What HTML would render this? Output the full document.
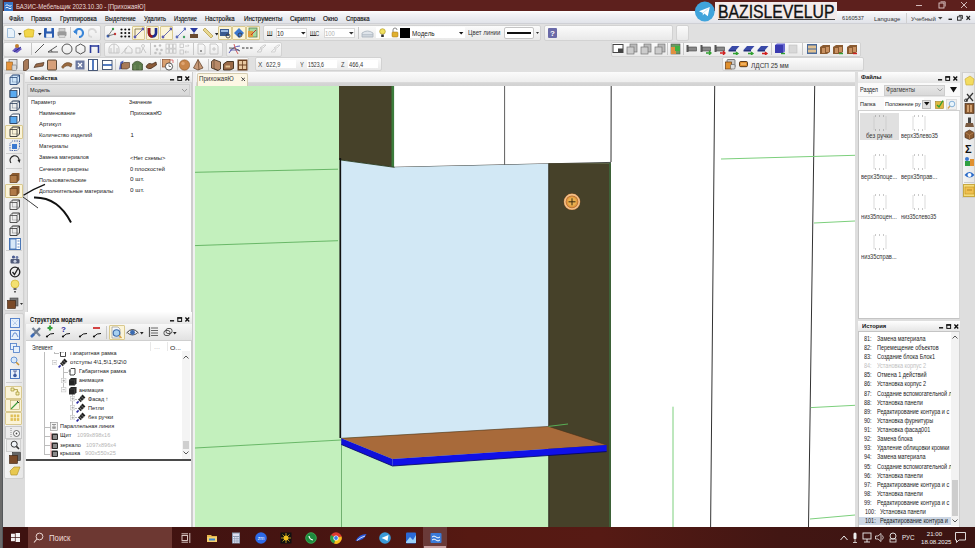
<!DOCTYPE html><html><head><meta charset="utf-8"><style>
*{margin:0;padding:0;box-sizing:border-box}
html,body{width:975px;height:548px;overflow:hidden;background:#e1e1e1;font-family:"Liberation Sans",sans-serif;color:#222;position:relative}
.a{position:absolute}
.t{position:absolute;white-space:nowrap;line-height:1}
.grp{position:absolute;border:1px solid #d2d2d2;border-radius:2px;background:linear-gradient(#fbfbfb,#e9e9e9)}
.hl{position:absolute;background:#fbf4d8;border:1px solid #d9c98f;border-radius:1px}
.sep{position:absolute;width:1px;background:#c8c8c8}
.inp{position:absolute;background:#fff;border:1px solid #d8d8d8}
.pt{font-size:5.6px;color:#333}
</style></head><body>
<div class="a" style="left:0px;top:0px;width:975px;height:11.3px;background:#5d201d"></div>
<svg class="a" style="left:4px;top:1.5px;" width="9" height="9" viewBox="0 0 9 9"><rect x="0" y="0" width="9" height="9" fill="#3a78c8"/><path d="M1.5 3.5 Q3 2 4.5 3.5 T7.5 3.5 M1.5 6 Q3 4.5 4.5 6 T7.5 6" stroke="#fff" stroke-width="0.9" fill="none"/></svg>
<div class="t" style="left:15.60px;top:4.14px;font-size:7.12px;transform:scaleX(0.849);transform-origin:0 0;color:#eadad8">БАЗИС-Мебельщик 2023.10.30 - [ПрихожаяЮ]</div>
<svg class="a" style="left:914px;top:0px;" width="56" height="11" viewBox="0 0 56 11"><path d="M2 5.5 H8" stroke="#e0cccc" stroke-width="0.9"/><rect x="25" y="3" width="5" height="5" fill="none" stroke="#e0cccc" stroke-width="0.9"/><path d="M26.5 1.8 H31.2 V6.5" fill="none" stroke="#e0cccc" stroke-width="0.8"/><path d="M47 2 L53 8 M53 2 L47 8" stroke="#e0cccc" stroke-width="0.9"/></svg>
<div class="a" style="left:0px;top:0px;width:3px;height:548px;background:linear-gradient(90deg,#6a6a6a 0,#6a6a6a 2px,#54575a 2px)"></div>
<div class="a" style="left:3px;top:11.3px;width:972px;height:12.7px;background:linear-gradient(#ffffff 0%,#f3f4f7 25%,#e2e4ea 95%);border-bottom:1px solid #cfd0d5"></div>
<div class="a" style="left:3px;top:24px;width:972px;height:1px;background:#fafafa"></div>
<div class="t" style="left:9.20px;top:15.71px;font-size:6.54px;transform:scaleX(0.896);transform-origin:0 0;color:#111;-webkit-text-stroke:0.15px #111">Файл</div>
<div class="t" style="left:31.20px;top:15.71px;font-size:6.54px;transform:scaleX(0.928);transform-origin:0 0;color:#111;-webkit-text-stroke:0.15px #111">Правка</div>
<div class="t" style="left:59.50px;top:15.71px;font-size:6.54px;transform:scaleX(0.968);transform-origin:0 0;color:#111;-webkit-text-stroke:0.15px #111">Группировка</div>
<div class="t" style="left:104.60px;top:15.71px;font-size:6.54px;transform:scaleX(0.889);transform-origin:0 0;color:#111;-webkit-text-stroke:0.15px #111">Выделение</div>
<div class="t" style="left:143.60px;top:15.71px;font-size:6.54px;transform:scaleX(0.885);transform-origin:0 0;color:#111;-webkit-text-stroke:0.15px #111">Удалить</div>
<div class="t" style="left:174.00px;top:15.71px;font-size:6.54px;transform:scaleX(0.888);transform-origin:0 0;color:#111;-webkit-text-stroke:0.15px #111">Изделие</div>
<div class="t" style="left:205.30px;top:15.71px;font-size:6.54px;transform:scaleX(0.922);transform-origin:0 0;color:#111;-webkit-text-stroke:0.15px #111">Настройка</div>
<div class="t" style="left:243.60px;top:15.71px;font-size:6.54px;transform:scaleX(0.947);transform-origin:0 0;color:#111;-webkit-text-stroke:0.15px #111">Инструменты</div>
<div class="t" style="left:289.80px;top:15.71px;font-size:6.54px;transform:scaleX(0.965);transform-origin:0 0;color:#111;-webkit-text-stroke:0.15px #111">Скрипты</div>
<div class="t" style="left:322.80px;top:15.71px;font-size:6.54px;transform:scaleX(0.974);transform-origin:0 0;color:#111;-webkit-text-stroke:0.15px #111">Окно</div>
<div class="t" style="left:345.80px;top:15.71px;font-size:6.54px;transform:scaleX(0.920);transform-origin:0 0;color:#111;-webkit-text-stroke:0.15px #111">Справка</div>
<div class="t" style="left:842.00px;top:16.04px;font-size:5.96px;transform:scaleX(0.944);transform-origin:0 0;color:#333">6160537</div>
<div class="t" style="left:873.60px;top:15.98px;font-size:6.10px;transform:scaleX(0.968);transform-origin:0 0;color:#333">Language</div>
<div class="a" style="left:906px;top:13px;width:0.8px;height:10px;background:#d0d0d0"></div>
<div class="t" style="left:910.70px;top:15.98px;font-size:6.10px;transform:scaleX(0.990);transform-origin:0 0;color:#333">Учебный</div>
<svg class="a" style="left:938px;top:17px;" width="5" height="3" viewBox="0 0 5 3"><path d="M0 0 H4.5 L2.25 2.5 Z" fill="#444"/></svg>
<svg class="a" style="left:947px;top:14px;" width="26" height="9" viewBox="0 0 26 9"><rect x="1.5" y="4.6" width="3.5" height="1.4" fill="#222"/><rect x="10.5" y="2.8" width="3.6" height="3.4" fill="none" stroke="#222" stroke-width="0.9"/><path d="M11.8 1.4 H15.4 V5" fill="none" stroke="#222" stroke-width="0.9"/><path d="M19.5 2 L23 5.8 M23 2 L19.5 5.8" stroke="#222" stroke-width="1.2"/></svg>
<div class="a" style="left:714.6px;top:1.6px;width:122.3px;height:18.1px;background:#f3ebeb"></div>
<div class="a" style="left:718px;top:18.9px;width:117px;height:1.1px;background:#444"></div>
<div class="t" style="left:717.90px;top:4.26px;font-size:17.88px;transform:scaleX(0.882);transform-origin:0 0;color:#111;-webkit-text-stroke:0.35px #111">BAZISLEVELUP</div>
<svg class="a" style="left:694px;top:1px;" width="22" height="22" viewBox="0 0 22 22"><circle cx="10.8" cy="10.5" r="9.9" fill="#40a4dc"/><path d="M5 10.3 L15.8 6 L13.8 15.2 L10.3 12.6 L8.8 14.5 L8.8 12 Z" fill="#fff"/><path d="M8.8 12 L14.3 7.6" stroke="#b8dcf0" stroke-width="0.8"/></svg>
<div class="a" style="left:3px;top:24px;width:972px;height:48px;background:#e0e0e0"></div>
<div class="grp" style="left:3px;top:24.5px;width:98px;height:16.5px;"></div>
<div class="grp" style="left:104px;top:24.5px;width:156px;height:16.5px;"></div>
<div class="grp" style="left:263px;top:24.5px;width:278px;height:16.5px;"></div>
<div class="grp" style="left:544px;top:24.5px;width:129px;height:16.5px;"></div>
<div class="grp" style="left:676px;top:24.5px;width:13px;height:16.5px;"></div>
<svg class="a" style="left:6px;top:28px;" width="10" height="10" viewBox="0 0 10 10"><path d="M1.5 0.5 H6 L8.5 3 V9.5 H1.5 Z" fill="#e8f2fb" stroke="#9fbcd8" stroke-width="1"/></svg>
<svg class="a" style="left:17.8px;top:32.6px;" width="4" height="3" viewBox="0 0 4 3"><path d="M0 0 H3.6 L1.8 2.4 Z" fill="#222"/></svg>
<svg class="a" style="left:23px;top:28px;" width="12" height="10" viewBox="0 0 12 10"><path d="M1 3 L5 1 L11 2 L10 9 L2 9 Z" fill="#f2d64a" stroke="#d2b020" stroke-width="0.8"/></svg>
<svg class="a" style="left:37.8px;top:32.6px;" width="4" height="3" viewBox="0 0 4 3"><path d="M0 0 H3.6 L1.8 2.4 Z" fill="#222"/></svg>
<svg class="a" style="left:43.6px;top:28.1px;" width="10.2" height="9.7" viewBox="0 0 10.2 9.7"><rect x="0" y="0" width="10.2" height="9.7" rx="1" fill="#2a5cb0"/><rect x="2.8" y="0" width="4.6" height="3.4" fill="#eef2f8"/><rect x="2.2" y="5.6" width="5.8" height="4.1" fill="#eef2f8"/></svg>
<svg class="a" style="left:57px;top:28px;" width="10" height="10" viewBox="0 0 10 10"><rect x="2" y="0.5" width="6" height="3" fill="#cfcfcf" stroke="#999" stroke-width="0.6"/><rect x="0.5" y="3.5" width="9" height="4.5" rx="1" fill="#9a9a9a"/><rect x="2" y="7" width="6" height="2.5" fill="#ddd" stroke="#999" stroke-width="0.5"/></svg>
<div class="sep" style="left:70px;top:27px;width:1px;height:11px;"></div>
<svg class="a" style="left:73px;top:28px;" width="11" height="10" viewBox="0 0 11 10"><path d="M2 5 A4 4 0 1 1 6 9" fill="none" stroke="#3a86d8" stroke-width="2.2"/><path d="M0 3 L4 7 L4.5 2 Z" fill="#3a86d8"/></svg>
<svg class="a" style="left:88px;top:28px;" width="10" height="10" viewBox="0 0 10 10"><path d="M8 5 A4 4 0 1 0 4 9" fill="none" stroke="#d8d8d8" stroke-width="2"/></svg>
<svg class="a" style="left:106px;top:27px;" width="11" height="12" viewBox="0 0 11 12"><circle cx="2" cy="9" r="1.5" fill="#3c5fb0"/><circle cx="7" cy="2" r="1.2" fill="#3aa04a"/><circle cx="9" cy="7" r="1.2" fill="#d03030"/><path d="M2 9 L7 2 M2 9 L9 7" stroke="#555" stroke-width="0.7"/></svg>
<svg class="a" style="left:120px;top:28px;" width="11" height="10" viewBox="0 0 11 10"><circle cx="1.5" cy="1.5" r="1.1" fill="#111"/><circle cx="1.5" cy="5.0" r="1.1" fill="#111"/><circle cx="1.5" cy="8.5" r="1.1" fill="#111"/><circle cx="5.3" cy="1.5" r="1.1" fill="#111"/><circle cx="5.3" cy="5.0" r="1.1" fill="#111"/><circle cx="5.3" cy="8.5" r="1.1" fill="#111"/><circle cx="9.1" cy="1.5" r="1.1" fill="#111"/><circle cx="9.1" cy="5.0" r="1.1" fill="#111"/><circle cx="9.1" cy="8.5" r="1.1" fill="#111"/></svg>
<div class="hl" style="left:132px;top:26px;width:13px;height:14px;"></div>
<svg class="a" style="left:133px;top:27px;" width="11" height="12" viewBox="0 0 11 12"><path d="M2 10 V2 H10" fill="none" stroke="#7a6a40" stroke-width="0.8"/><path d="M2 10 L10 2" stroke="#6a6ab0" stroke-width="1"/><circle cx="2" cy="10" r="1.4" fill="#5a5ab0"/><circle cx="10" cy="2" r="1.4" fill="#5a5ab0"/></svg>
<div class="hl" style="left:146px;top:26px;width:13px;height:14px;"></div>
<svg class="a" style="left:147px;top:27px;" width="11" height="12" viewBox="0 0 11 12"><path d="M2 1 V6 A3.5 3.5 0 0 0 9 6 V1" fill="none" stroke="#1e2e90" stroke-width="2.6"/><path d="M2 1 V6 A3.5 3.5 0 0 0 5.5 9.5" fill="none" stroke="#9a1a1a" stroke-width="2.6"/></svg>
<div class="hl" style="left:160px;top:26px;width:13px;height:14px;"></div>
<svg class="a" style="left:161px;top:27px;" width="11" height="12" viewBox="0 0 11 12"><path d="M2 10 L10 2" stroke="#6a6ab0" stroke-width="1"/><circle cx="2" cy="10" r="1.4" fill="#5a5ab0"/><circle cx="10" cy="2" r="1.4" fill="#5a5ab0"/></svg>
<svg class="a" style="left:175px;top:27px;" width="11" height="12" viewBox="0 0 11 12"><path d="M2 10 L10 2" stroke="#6a7ac0" stroke-width="1"/><circle cx="2" cy="10" r="1.4" fill="#5a6ab8"/><circle cx="10" cy="2" r="1.4" fill="#5a6ab8"/><circle cx="9" cy="10" r="1.2" fill="#40a060"/></svg>
<svg class="a" style="left:189px;top:27px;" width="10" height="12" viewBox="0 0 10 12"><path d="M1 1 H9 L5 6 L9 11 H1 L5 6 Z" fill="#2a3aa0"/><rect x="1" y="7" width="8" height="4" fill="#6a4a30"/></svg>
<svg class="a" style="left:202px;top:27px;" width="12" height="12" viewBox="0 0 12 12"><path d="M1 3 L3 1 L11 9 L9 11 Z" fill="#e8d890" stroke="#b8a050" stroke-width="0.8"/></svg>
<svg class="a" style="left:215.3px;top:32.6px;" width="4" height="3" viewBox="0 0 4 3"><path d="M0 0 H3.6 L1.8 2.4 Z" fill="#222"/></svg>
<div class="hl" style="left:218px;top:26px;width:14px;height:14px;"></div>
<svg class="a" style="left:219px;top:27px;" width="12" height="12" viewBox="0 0 12 12"><rect x="1" y="2" width="9" height="7" fill="#3a5a90"/><rect x="2" y="3" width="7" height="2" fill="#9ab8e0"/><circle cx="9" cy="9" r="2" fill="none" stroke="#333" stroke-width="0.8"/></svg>
<div class="hl" style="left:232px;top:26px;width:14px;height:14px;"></div>
<svg class="a" style="left:233px;top:27px;" width="12" height="12" viewBox="0 0 12 12"><path d="M1 6 L6 1 L11 6 L6 11 Z" fill="#3a78d0"/><circle cx="7" cy="8" r="2" fill="none" stroke="#333" stroke-width="0.8"/></svg>
<div class="hl" style="left:246px;top:26px;width:14px;height:14px;"></div>
<svg class="a" style="left:247px;top:27px;" width="12" height="12" viewBox="0 0 12 12"><rect x="2" y="1" width="8" height="9" fill="#a8d8a0" stroke="#508050" stroke-width="0.8"/><rect x="1" y="4" width="5" height="6" fill="#e0a040"/><path d="M4 8 L9 3" stroke="#c03030" stroke-width="1"/></svg>
<div class="t" style="left:266.70px;top:30.44px;font-size:7.27px;transform:scaleX(0.841);transform-origin:0 0;color:#333">Ш</div>
<div class="a" style="left:266.7px;top:35.3px;width:5.6px;height:0.9px;background:#333"></div>
<div class="inp" style="left:276.4px;top:27.6px;width:30.8px;height:10.2px;"></div>
<div class="t" style="left:277.40px;top:30.35px;font-size:6.98px;transform:scaleX(0.863);transform-origin:0 0;color:#222">10</div>
<svg class="a" style="left:300.5px;top:32px;" width="5" height="3" viewBox="0 0 5 3"><path d="M0 0 H4.6 L2.3 2.6 Z" fill="#222"/></svg>
<div class="t" style="left:310.30px;top:30.44px;font-size:7.27px;transform:scaleX(0.772);transform-origin:0 0;color:#333">ШС</div>
<div class="a" style="left:310.3px;top:35.3px;width:6px;height:0.9px;background:#333"></div>
<div class="inp" style="left:324.1px;top:27.6px;width:30.8px;height:10.2px;"></div>
<div class="t" style="left:325.10px;top:30.35px;font-size:6.98px;transform:scaleX(0.842);transform-origin:0 0;color:#b0b0b0">100</div>
<svg class="a" style="left:348.7px;top:32px;" width="5" height="3" viewBox="0 0 5 3"><path d="M0 0 H4.6 L2.3 2.6 Z" fill="#333"/></svg>
<div class="sep" style="left:357.5px;top:27px;width:0.8px;height:12px;"></div>
<svg class="a" style="left:360.8px;top:28.5px;" width="13" height="9" viewBox="0 0 13 9"><path d="M1 4 Q6.5 0 12 4 V8 H1 Z" fill="#dfe4ea" stroke="#a8b2bc" stroke-width="0.8"/><path d="M1 5.5 H12 M1 7 H12" stroke="#a8b2bc" stroke-width="0.6"/></svg>
<div class="a" style="left:375.5px;top:27px;width:89.6px;height:11px;background:#fff"></div>
<svg class="a" style="left:379.4px;top:27.5px;" width="7" height="10" viewBox="0 0 7 10"><circle cx="3.5" cy="3.5" r="2.8" fill="#f0e060" stroke="#a89020" stroke-width="0.6"/><rect x="2.2" y="6.5" width="2.6" height="2.5" fill="#333"/></svg>
<svg class="a" style="left:390.5px;top:27px;" width="8" height="11" viewBox="0 0 8 11"><path d="M2 5 V3 A2 2 0 0 1 6 3" fill="none" stroke="#888" stroke-width="1"/><rect x="1" y="5" width="6" height="5" rx="1" fill="#e0b030" stroke="#a07010" stroke-width="0.5"/></svg>
<div class="a" style="left:399.8px;top:28.3px;width:9.8px;height:9.3px;background:#000"></div>
<div class="t" style="left:411.90px;top:30.71px;font-size:6.54px;transform:scaleX(0.963);transform-origin:0 0;color:#222">Модель</div>
<svg class="a" style="left:459.3px;top:32px;" width="5" height="3" viewBox="0 0 5 3"><path d="M0 0 H4.4 L2.2 2.6 Z" fill="#111"/></svg>
<div class="t" style="left:468.00px;top:30.36px;font-size:6.69px;transform:scaleX(0.906);transform-origin:0 0;color:#333">Цвет линии</div>
<div class="inp" style="left:503.5px;top:27px;width:30.5px;height:11.6px;border-radius:2px;border-color:#c4c4c4"></div>
<div class="a" style="left:507px;top:32.3px;width:24.4px;height:1.6px;background:#111"></div>
<svg class="a" style="left:535.9px;top:32px;" width="3" height="2" viewBox="0 0 3 2"><path d="M0 0 H3 L1.5 2 Z" fill="#333"/></svg>
<svg class="a" style="left:548px;top:28px;" width="9" height="10" viewBox="0 0 9 10"><rect x="0" y="0" width="9" height="10" rx="1" fill="#6a6aa8"/><text x="4.5" y="8" font-size="8" font-family="Liberation Sans" font-weight="bold" fill="#fff" text-anchor="middle">?</text></svg>
<div class="grp" style="left:3px;top:41.5px;width:98px;height:15px;"></div>
<div class="grp" style="left:104px;top:41.5px;width:119px;height:15px;"></div>
<div class="grp" style="left:225.7px;top:41.5px;width:56.6px;height:15px;"></div>
<div class="grp" style="left:610.5px;top:41.5px;width:250px;height:15px;"></div>
<svg class="a" style="left:11px;top:43px;" width="12" height="11" viewBox="0 0 12 11"><path d="M1 8 L6 3 L11 6 L6 10 Z" fill="#6a5ac0"/><circle cx="6" cy="3" r="2" fill="#c08030"/><path d="M3 9 L10 4" stroke="#2a2a8a" stroke-width="1"/></svg>
<div class="sep" style="left:31px;top:43px;width:1px;height:12px;"></div>
<svg class="a" style="left:34px;top:43px;" width="11" height="11" viewBox="0 0 11 11"><path d="M1 10 L10 1" stroke="#444" stroke-width="0.9"/></svg>
<svg class="a" style="left:47px;top:43px;" width="12" height="11" viewBox="0 0 12 11"><path d="M1 9 H11 M1 9 L10 3" stroke="#444" stroke-width="0.9" fill="none"/><path d="M5 9 A4 4 0 0 0 4 7" stroke="#444" stroke-width="0.8" fill="none"/></svg>
<svg class="a" style="left:61px;top:43px;" width="12" height="12" viewBox="0 0 12 12"><circle cx="6" cy="6" r="5" fill="none" stroke="#444" stroke-width="0.9"/></svg>
<svg class="a" style="left:75px;top:43px;" width="11" height="12" viewBox="0 0 11 12"><path d="M5.5 1 L10 3.5 V8.5 L5.5 11 L1 8.5 V3.5 Z" fill="none" stroke="#444" stroke-width="0.9"/></svg>
<svg class="a" style="left:89px;top:43px;" width="11" height="11" viewBox="0 0 11 11"><path d="M1.5 10 V2 M9.5 10 V2 M1.5 3 H9.5" stroke="#2a3a9a" stroke-width="1.6" fill="none"/></svg>
<svg class="a" style="left:107.5px;top:43px;" width="12" height="12" viewBox="0 0 12 12"><path d="M1 10 V6 A5 5 0 0 1 11 6 V10 Z M6 1 V10 M3 10 V5 M9 10 V5" fill="none" stroke="#c2c2c2" stroke-width="0.9"/></svg>
<svg class="a" style="left:121px;top:43px;" width="12" height="12" viewBox="0 0 12 12"><path d="M4 10 V6 L7.5 3 L11 6 V10 Z" fill="none" stroke="#c2c2c2" stroke-width="0.9"/><path d="M0.5 11 L6 5" stroke="#c2c2c2" stroke-width="0.9"/></svg>
<svg class="a" style="left:134.5px;top:43px;" width="12" height="12" viewBox="0 0 12 12"><rect x="1" y="5" width="4" height="5" fill="none" stroke="#c2c2c2" stroke-width="0.9"/><circle cx="8" cy="3" r="1.5" fill="none" stroke="#c2c2c2" stroke-width="0.8"/><path d="M6 10 L8 5 L11 10" fill="none" stroke="#c2c2c2" stroke-width="0.9"/></svg>
<div class="sep" style="left:149.5px;top:43px;width:1px;height:12px;"></div>
<svg class="a" style="left:151.5px;top:43px;" width="12" height="12" viewBox="0 0 12 12"><circle cx="3" cy="3" r="1.3" fill="#c2c2c2"/><circle cx="8" cy="2.5" r="1.3" fill="#c2c2c2"/><circle cx="5" cy="6.5" r="1.3" fill="#c2c2c2"/><circle cx="9.5" cy="7" r="1.3" fill="#c2c2c2"/><circle cx="3.5" cy="10" r="1.3" fill="#c2c2c2"/><circle cx="8" cy="10.5" r="1.3" fill="#c2c2c2"/></svg>
<svg class="a" style="left:165px;top:43px;" width="12" height="12" viewBox="0 0 12 12"><rect x="1.0" y="1" width="2.8" height="4.2" fill="none" stroke="#c2c2c2" stroke-width="0.8"/><rect x="1.0" y="6" width="2.8" height="4.2" fill="none" stroke="#c2c2c2" stroke-width="0.8"/><rect x="4.6" y="1" width="2.8" height="4.2" fill="none" stroke="#c2c2c2" stroke-width="0.8"/><rect x="4.6" y="6" width="2.8" height="4.2" fill="none" stroke="#c2c2c2" stroke-width="0.8"/><rect x="8.2" y="1" width="2.8" height="4.2" fill="none" stroke="#c2c2c2" stroke-width="0.8"/><rect x="8.2" y="6" width="2.8" height="4.2" fill="none" stroke="#c2c2c2" stroke-width="0.8"/></svg>
<svg class="a" style="left:178.5px;top:43px;" width="12" height="12" viewBox="0 0 12 12"><rect x="1" y="1" width="3.5" height="3.5" fill="none" stroke="#c2c2c2" stroke-width="0.8"/><rect x="1" y="7" width="3.5" height="4" fill="none" stroke="#c2c2c2" stroke-width="0.8"/><path d="M6 3 H10 L9 1.5 M6 9 H10 M7 7.5 L6 9 L7 10.5" fill="none" stroke="#c2c2c2" stroke-width="0.8"/></svg>
<div class="sep" style="left:192.5px;top:43px;width:1px;height:12px;"></div>
<svg class="a" style="left:197px;top:43px;" width="9" height="12" viewBox="0 0 9 12"><path d="M1 1 H6 L8 3 V11 H1 Z" fill="none" stroke="#c2c2c2" stroke-width="0.9"/><rect x="3" y="7" width="2" height="2" fill="#999"/></svg>
<svg class="a" style="left:209px;top:43px;" width="10" height="12" viewBox="0 0 10 12"><path d="M1 1 H7 L9 3 V11 H1 Z" fill="none" stroke="#c2c2c2" stroke-width="0.9"/><path d="M5 4 V8 M3 6 H7" stroke="#c2c2c2" stroke-width="0.9"/></svg>
<svg class="a" style="left:228px;top:43px;" width="13" height="12" viewBox="0 0 13 12"><path d="M1 10 Q5 3 12 3" stroke="#5a5ab8" stroke-width="1" fill="none"/><path d="M1 5 Q7 4 12 8" stroke="#444" stroke-width="0.9" fill="none"/><path d="M6 1 Q7 7 10 11" stroke="#d05050" stroke-width="0.9" fill="none"/><path d="M2 7 H11" stroke="#3a3a9a" stroke-width="0.7"/></svg>
<svg class="a" style="left:242.3px;top:46px;" width="11" height="4" viewBox="0 0 11 4"><path d="M0 2 H2.5 M4 2 H6.5 M8 2 H10.5" stroke="#333" stroke-width="1.2"/></svg>
<svg class="a" style="left:256px;top:43px;" width="10" height="12" viewBox="0 0 10 12"><path d="M1 9 L4 6 H6 L5 9 Z M4 5 L8 2 H10 L7 5 Z" fill="none" stroke="#c8c8c8" stroke-width="0.9"/></svg>
<svg class="a" style="left:269.6px;top:43px;" width="10" height="12" viewBox="0 0 10 12"><path d="M1 9 L4 6 H6 L5 9 Z M4 5 L8 2 H10 L7 5 Z" fill="none" stroke="#d0d0d0" stroke-width="0.9"/></svg>
<svg class="a" style="left:612px;top:43px;" width="12" height="11" viewBox="0 0 12 11"><rect x="1" y="1.5" width="10" height="8" fill="#fff" stroke="#444" stroke-width="1"/><rect x="6" y="5.5" width="5" height="4" fill="#444"/></svg>
<svg class="a" style="left:626px;top:43px;" width="12" height="12" viewBox="0 0 12 12"><rect x="4" y="1" width="7" height="8" fill="#bbb" stroke="#777" stroke-width="0.7"/><rect x="1" y="4" width="7" height="7" fill="#ccc" stroke="#777" stroke-width="0.7"/></svg>
<svg class="a" style="left:640px;top:43px;" width="12" height="12" viewBox="0 0 12 12"><rect x="4" y="1" width="7" height="8" fill="#bbb" stroke="#777" stroke-width="0.7"/><rect x="1" y="4" width="7" height="7" fill="#ccc" stroke="#777" stroke-width="0.7"/></svg>
<svg class="a" style="left:654px;top:43px;" width="12" height="12" viewBox="0 0 12 12"><rect x="4" y="1" width="7" height="8" fill="#bbb" stroke="#777" stroke-width="0.7"/><rect x="1" y="4" width="7" height="7" fill="#ccc" stroke="#777" stroke-width="0.7"/></svg>
<div class="sep" style="left:667px;top:43px;width:1px;height:12px;"></div>
<svg class="a" style="left:670px;top:43px;" width="11" height="12" viewBox="0 0 11 12"><rect x="1" y="1" width="9" height="10" fill="#6a9a60" stroke="#555" stroke-width="0.6"/><rect x="1" y="4" width="5" height="7" fill="#e09040"/><rect x="5" y="3" width="5" height="5" fill="#40b040"/></svg>
<div class="sep" style="left:683px;top:43px;width:1px;height:12px;"></div>
<svg class="a" style="left:686px;top:43px;" width="12" height="12" viewBox="0 0 12 12"><rect x="0.5" y="2" width="2" height="7" fill="#555"/><rect x="2.5" y="4" width="8" height="4" fill="#888" stroke="#444" stroke-width="0.6"/></svg>
<svg class="a" style="left:700px;top:43px;" width="12" height="12" viewBox="0 0 12 12"><rect x="0.5" y="2" width="2" height="7" fill="#555"/><rect x="2.5" y="4" width="8" height="4" fill="#888" stroke="#444" stroke-width="0.6"/><path d="M6 10 H11 M9 8 L11 10 L9 12" stroke="#30a030" stroke-width="1.3" fill="none"/></svg>
<svg class="a" style="left:714px;top:43px;" width="12" height="12" viewBox="0 0 12 12"><rect x="0.5" y="2" width="2" height="7" fill="#555"/><rect x="2.5" y="4" width="8" height="4" fill="#888" stroke="#444" stroke-width="0.6"/><path d="M6 10 H11 M9 8 L11 10 L9 12" stroke="#d02020" stroke-width="1.3" fill="none"/></svg>
<svg class="a" style="left:728px;top:43px;" width="12" height="12" viewBox="0 0 12 12"><path d="M0.5 7 L4 3 H11.5 L8 7 Z" fill="#3a4aa8"/><path d="M0.5 7 H8 V8.5 H0.5 Z" fill="#23307a"/><path d="M5 10.5 H10 M8 9 L10 10.5 L8 12" stroke="#30a030" stroke-width="1.3" fill="none"/></svg>
<svg class="a" style="left:743px;top:43px;" width="12" height="12" viewBox="0 0 12 12"><path d="M0.5 7 L4 3 H11.5 L8 7 Z" fill="#3a4aa8"/><path d="M0.5 7 H8 V8.5 H0.5 Z" fill="#23307a"/><path d="M5 10.5 H10 M8 9 L10 10.5 L8 12" stroke="#30a030" stroke-width="1.3" fill="none"/></svg>
<svg class="a" style="left:757px;top:43px;" width="12" height="12" viewBox="0 0 12 12"><path d="M0.5 7 L4 3 H11.5 L8 7 Z" fill="#3a4aa8"/><path d="M0.5 7 H8 V8.5 H0.5 Z" fill="#23307a"/><path d="M5 10.5 H10 M8 9 L10 10.5 L8 12" stroke="#d02020" stroke-width="1.3" fill="none"/></svg>
<div class="sep" style="left:771px;top:43px;width:1px;height:12px;"></div>
<svg class="a" style="left:774px;top:43px;" width="12" height="12" viewBox="0 0 12 12"><rect x="1" y="2" width="8" height="8" fill="#3a3ab0"/><path d="M1 2 L3 0.5 H11 L9 2 Z M9 2 L11 0.5 V8.5 L9 10 Z" fill="#6a6ad0"/><path d="M7 10.5 H11" stroke="#30a030" stroke-width="1.4"/></svg>
<svg class="a" style="left:788px;top:43px;" width="12" height="12" viewBox="0 0 12 12"><rect x="1" y="2" width="8" height="8" fill="#d8d8d8" stroke="#c0c0c0" stroke-width="0.6"/></svg>
<div class="sep" style="left:802px;top:43px;width:1px;height:12px;"></div>
<svg class="a" style="left:806px;top:43px;" width="12" height="12" viewBox="0 0 12 12"><rect x="1" y="1" width="10" height="10" fill="#4a6a9a"/><rect x="2" y="2.5" width="8" height="3" fill="#e0c090"/><rect x="2" y="6.5" width="8" height="3" fill="#e0c090"/></svg>
<svg class="a" style="left:819px;top:43px;" width="12" height="12" viewBox="0 0 12 12"><path d="M1 4 L4 2 H11 V9 L8 11 H1 Z" fill="#8a5a30"/><path d="M3 5 H6 V10 H3 Z M7 4 H10 V9 H7Z" fill="#c89060"/></svg>
<svg class="a" style="left:832px;top:43px;" width="12" height="12" viewBox="0 0 12 12"><path d="M1 4 L4 2 H11 V9 L8 11 H1 Z" fill="#8a5a30"/><path d="M3 5 H6 V10 H3 Z M7 4 H10 V9 H7Z" fill="#c89060"/><path d="M7 10.5 H11" stroke="#30a030" stroke-width="1.4"/></svg>
<svg class="a" style="left:846px;top:43px;" width="12" height="12" viewBox="0 0 12 12"><path d="M1 4 L4 2 H11 V9 L8 11 H1 Z" fill="#8a5a30"/><path d="M3 5 H6 V10 H3 Z M7 4 H10 V9 H7Z" fill="#c89060"/><path d="M7 10.5 H11" stroke="#d02020" stroke-width="1.4"/></svg>
<div class="grp" style="left:3px;top:56.8px;width:246px;height:14.4px;"></div>
<div class="grp" style="left:255px;top:57.2px;width:127.1px;height:13.6px;"></div>
<div class="grp" style="left:722.2px;top:56.6px;width:142.2px;height:14.3px;"></div>
<svg class="a" style="left:5.5px;top:58.5px;" width="12" height="12" viewBox="0 0 12 12"><rect x="3" y="0.5" width="8" height="9" fill="#e0e0e0" stroke="#666" stroke-width="0.7"/><rect x="0.5" y="3" width="6" height="8" fill="#e8943a" stroke="#8a5a20" stroke-width="0.6"/><rect x="6" y="6" width="4.5" height="5.5" rx="1" fill="#d8d8d8" stroke="#777" stroke-width="0.6"/></svg>
<svg class="a" style="left:21.5px;top:58.5px;" width="8" height="12" viewBox="0 0 8 12"><path d="M1.5 2.5 L4 0.5 H6.5 V9.5 L4 11.5 H1.5 Z" fill="#a87a58" stroke="#4a3020" stroke-width="0.7"/></svg>
<svg class="a" style="left:32.5px;top:58.5px;" width="12" height="12" viewBox="0 0 12 12"><path d="M1 8.5 L3 5 L11 3.5 L10 7 Z" fill="#9a6a48" stroke="#4a3020" stroke-width="0.7"/></svg>
<svg class="a" style="left:47px;top:58.5px;" width="11" height="12" viewBox="0 0 11 12"><rect x="0.5" y="1" width="9" height="10" rx="1" fill="#d6a07a" stroke="#3a2a18" stroke-width="0.8"/></svg>
<svg class="a" style="left:60.5px;top:58.5px;" width="12" height="12" viewBox="0 0 12 12"><path d="M0.5 8 Q5 1 11 5 L10 8 Q5 5 2 9.5 Z" fill="#9a6a40" stroke="#5a3a18" stroke-width="0.5"/></svg>
<svg class="a" style="left:74.5px;top:58.5px;" width="11" height="12" viewBox="0 0 11 12"><rect x="0.5" y="1.5" width="9" height="9" fill="#6a78a0"/><path d="M3 4 L7 8 M7 4 L3 8" stroke="#fff" stroke-width="1.2"/></svg>
<svg class="a" style="left:88px;top:58.5px;" width="11" height="12" viewBox="0 0 11 12"><rect x="0.5" y="0.5" width="9" height="11" fill="#fff" stroke="#3a4a6a" stroke-width="0.9"/><path d="M5 1 V11" stroke="#2a5ab0" stroke-width="1.6"/></svg>
<svg class="a" style="left:101.5px;top:58.5px;" width="11" height="12" viewBox="0 0 11 12"><rect x="0.5" y="1.5" width="9.5" height="9" fill="#fff" stroke="#3a4a6a" stroke-width="0.9"/><path d="M1 6 H10" stroke="#2a5ab0" stroke-width="1.6"/></svg>
<div class="sep" style="left:114.7px;top:59px;width:1px;height:12px;"></div>
<svg class="a" style="left:117.7px;top:58.5px;" width="12" height="12" viewBox="0 0 12 12"><path d="M1 10.5 L2.5 3 L5.5 1.5 L4 10 Z" fill="#4a5ab0"/><path d="M3.5 5 L6 3.5 H11.5 V8.5 L9 10 H3.5 Z" fill="#a87a58" stroke="#4a3020" stroke-width="0.6"/></svg>
<svg class="a" style="left:132.3px;top:58.5px;" width="11" height="12" viewBox="0 0 11 12"><path d="M0.5 11 V5 Q5 -0.5 10.5 5 V11 Z" fill="#5a7a4a" stroke="#3a4a2a" stroke-width="0.7"/><path d="M3 11 V6 M8 11 V6" stroke="#8aa070" stroke-width="0.6"/></svg>
<svg class="a" style="left:145.4px;top:58.5px;" width="12" height="12" viewBox="0 0 12 12"><path d="M1 8 Q3 3 7 5 L11 3 L11.5 6 L6 9.5 Q3 10.5 1 8 Z" fill="#8a5a38" stroke="#3a2010" stroke-width="0.7"/></svg>
<div class="sep" style="left:160px;top:59px;width:1px;height:12px;"></div>
<svg class="a" style="left:162.3px;top:58.5px;" width="12" height="12" viewBox="0 0 12 12"><rect x="0.5" y="0.5" width="7.5" height="7.5" fill="#d8a070" stroke="#8a5030" stroke-width="0.7"/><path d="M8 1 H11 V4" stroke="#d04040" stroke-width="0.7" fill="none"/><circle cx="7" cy="7.5" r="3.6" fill="#fff" stroke="#333" stroke-width="0.8"/><path d="M7 5.5 V7.5 H9" stroke="#333" stroke-width="0.6" fill="none"/></svg>
<div class="sep" style="left:177px;top:59px;width:1px;height:12px;"></div>
<svg class="a" style="left:179.2px;top:58.5px;" width="11" height="12" viewBox="0 0 11 12"><circle cx="5.5" cy="6" r="5.2" fill="#c8864a" stroke="#7a4a20" stroke-width="0.5"/><circle cx="4" cy="4.5" r="1.8" fill="#e8b080" opacity="0.7"/></svg>
<svg class="a" style="left:193px;top:58.5px;" width="11" height="12" viewBox="0 0 11 12"><path d="M5 0.5 L10 9 L5 11 L0.5 9 Z" fill="#c89a78" stroke="#5a3a20" stroke-width="0.7"/><path d="M5 0.5 L6 11" stroke="#5a3a20" stroke-width="0.6"/></svg>
<div class="sep" style="left:207.7px;top:59px;width:1px;height:12px;"></div>
<svg class="a" style="left:210.8px;top:58.5px;" width="11" height="12" viewBox="0 0 11 12"><path d="M0.5 2.5 L3 0.5 L9.5 3 V10 L7 11.5 L0.5 9 Z" fill="#b88a68" stroke="#3a2a18" stroke-width="0.8"/><path d="M3 0.5 V9.5 L7 11.5" stroke="#3a2a18" stroke-width="0.5" fill="none"/></svg>
<svg class="a" style="left:223px;top:58.5px;" width="11" height="12" viewBox="0 0 11 12"><path d="M0.5 5 L4 2.5 H10.5 V9.5 L7 11 H0.5 Z" fill="#9a6a48" stroke="#2a1a08" stroke-width="0.8"/><rect x="2.5" y="6.5" width="4.5" height="2" fill="#e0c090"/></svg>
<svg class="a" style="left:237px;top:58.5px;" width="11" height="12" viewBox="0 0 11 12"><rect x="0.5" y="0.5" width="10" height="11" fill="#6a4020"/><rect x="2" y="2" width="3.2" height="3.5" fill="#e8c8a0"/><rect x="6" y="2" width="3.2" height="3.5" fill="#e8c8a0"/><rect x="2" y="6.5" width="3.2" height="3.5" fill="#e8c8a0"/><rect x="6" y="6.5" width="3.2" height="3.5" fill="#e8c8a0"/></svg>
<div class="t" style="left:257.90px;top:61.81px;font-size:6.54px;transform:scaleX(0.986);transform-origin:0 0;color:#444">X</div>
<div class="a" style="left:265.5px;top:59.8px;width:30.5px;height:8.7px;background:#fff"></div>
<div class="t" style="left:266.00px;top:62.19px;font-size:7.12px;transform:scaleX(0.808);transform-origin:0 0;color:#333">622,9</div>
<div class="t" style="left:299.50px;top:61.81px;font-size:6.54px;transform:scaleX(0.894);transform-origin:0 0;color:#444">Y</div>
<div class="a" style="left:306.7px;top:59.8px;width:30.2px;height:8.7px;background:#fff"></div>
<div class="t" style="left:308.00px;top:62.19px;font-size:7.12px;transform:scaleX(0.735);transform-origin:0 0;color:#333">1523,6</div>
<div class="t" style="left:340.50px;top:61.81px;font-size:6.54px;transform:scaleX(0.876);transform-origin:0 0;color:#444">Z</div>
<div class="a" style="left:347.6px;top:59.8px;width:30.2px;height:8.7px;background:#fff"></div>
<div class="t" style="left:348.60px;top:62.19px;font-size:7.12px;transform:scaleX(0.791);transform-origin:0 0;color:#333">466,4</div>
<svg class="a" style="left:724.8px;top:59.2px;" width="11" height="10.5" viewBox="0 0 11 10.5"><rect x="2" y="0.5" width="8" height="8" rx="1" fill="#c8c8c8" stroke="#555" stroke-width="0.7"/><rect x="0.5" y="3" width="6" height="7" fill="#e0902e" stroke="#6a3a10" stroke-width="0.7"/><rect x="5.5" y="5.5" width="4.5" height="4.5" rx="1" fill="#ddd" stroke="#555" stroke-width="0.6"/></svg>
<svg class="a" style="left:739px;top:61.4px;" width="9" height="6.2" viewBox="0 0 9 6.2"><rect x="0.5" y="0.5" width="8" height="5.2" rx="1.3" fill="#e0902e" stroke="#4a2a10" stroke-width="0.9"/><rect x="2" y="2" width="5" height="2" fill="#f0b060"/></svg>
<div class="t" style="left:750.80px;top:62.69px;font-size:7.12px;transform:scaleX(0.910);transform-origin:0 0;color:#333">ЛДСП 25 мм</div>
<!--TOOLBARS-->
<div class="a" style="left:195px;top:72px;width:660px;height:14px;background:linear-gradient(#fbfbfb 0px,#eeeeee 10px,#d6d6d6 10.6px,#d2d2d2 14px)"></div>
<div class="a" style="left:196.8px;top:73.4px;width:51.3px;height:12.6px;background:#fdf7e4;border:1px solid #d4ccb0;border-bottom:none;border-radius:2px 2px 0 0"></div>
<div class="t" style="left:199.00px;top:76.11px;font-size:6.54px;transform:scaleX(0.943);transform-origin:0 0;color:#333">ПрихожаяЮ</div>
<svg class="a" style="left:240.6px;top:76.6px;" width="4.6" height="4.6" viewBox="0 0 4.6 4.6"><path d="M0.4 0.4 L4.2 4.2 M4.2 0.4 L0.4 4.2" stroke="#444" stroke-width="1"/></svg>
<div class="a" style="left:191px;top:72px;width:4.5px;height:455px;background:linear-gradient(90deg,#cdcdcd 0,#cdcdcd 2px,#f0f0f0 2px)"></div>
<div class="a" style="left:3px;top:72px;width:22px;height:455px;background:#dcdcdc"></div>
<div class="a" style="left:4px;top:73px;width:20px;height:238px;background:linear-gradient(90deg,#f4f4f4,#e6e6e6);border:1px solid #d0d0d0;border-radius:2px"></div>
<div class="a" style="left:4px;top:313px;width:20px;height:166px;background:linear-gradient(90deg,#f4f4f4,#e6e6e6);border:1px solid #d0d0d0;border-radius:2px"></div>
<svg class="a" style="left:8.5px;top:73.5px;" width="12" height="12" viewBox="0 0 12 12"><path d="M1 3.5 L3.5 1 H10.5 V8 L8 10.5 H1 Z" fill="#cfe6fa" stroke="#2a4a7a" stroke-width="0.9"/><path d="M1 3.5 H8 V10.5 M8 3.5 L10.5 1" fill="none" stroke="#2a4a7a" stroke-width="0.8"/><rect x="3.5" y="1" width="7" height="7" fill="none" stroke="#2a4a7a" stroke-width="0.5" opacity="0.6"/></svg>
<svg class="a" style="left:8.5px;top:86.5px;" width="12" height="12" viewBox="0 0 12 12"><path d="M1 3.5 L3.5 1 H10.5 V8 L8 10.5 H1 Z" fill="#fff" stroke="#2c3e5a" stroke-width="0.9"/><rect x="1" y="3.5" width="7" height="7" fill="#5aaaf0" stroke="#2c3e5a" stroke-width="0.8"/></svg>
<svg class="a" style="left:8.5px;top:99.5px;" width="12" height="12" viewBox="0 0 12 12"><path d="M1 3.5 L3.5 1 H10.5 V8 L8 10.5 H1 Z" fill="none" stroke="#2c3e5a" stroke-width="0.9"/><path d="M1 3.5 H8 V10.5 M8 3.5 L10.5 1" fill="none" stroke="#2c3e5a" stroke-width="0.8"/><rect x="3.5" y="1" width="7" height="7" fill="none" stroke="#2c3e5a" stroke-width="0.5" opacity="0.6"/></svg>
<svg class="a" style="left:8.5px;top:112.5px;" width="12" height="12" viewBox="0 0 12 12"><path d="M1 3.5 L3.5 1 H10.5 V8 L8 10.5 H1 Z" fill="#fff" stroke="#2c3e5a" stroke-width="0.9"/><rect x="1" y="3.5" width="7" height="7" fill="#5aaaf0" stroke="#2c3e5a" stroke-width="0.8"/></svg>
<div class="hl" style="left:5px;top:125px;width:18px;height:14px;"></div>
<svg class="a" style="left:8.5px;top:126px;" width="12" height="12" viewBox="0 0 12 12"><path d="M1 3.5 L3.5 1 H10.5 V8 L8 10.5 H1 Z" fill="none" stroke="#333" stroke-width="0.9"/><path d="M1 3.5 H8 V10.5 M8 3.5 L10.5 1" fill="none" stroke="#333" stroke-width="0.8"/><rect x="3.5" y="1" width="7" height="7" fill="none" stroke="#333" stroke-width="0.5" opacity="0.6"/></svg>
<svg class="a" style="left:8.5px;top:139.5px;" width="12" height="12" viewBox="0 0 12 12"><path d="M1 3.5 L3.5 1 H10.5 V8 L8 10.5 H1 Z" fill="none" stroke="#3a5aa0" stroke-width="0.9" stroke-dasharray="1.5 1"/><rect x="3" y="4" width="5" height="5" fill="#3a78d0"/></svg>
<div class="a" style="left:6px;top:152.5px;width:16px;height:1px;background:#cfcfcf"></div>
<svg class="a" style="left:8.5px;top:155px;" width="12" height="12" viewBox="0 0 12 12"><path d="M2 8 A4.5 4.5 0 1 1 10 6" fill="none" stroke="#222" stroke-width="1.1"/><path d="M8.5 5 L10.5 8 L11.5 4.5 Z" fill="#222"/></svg>
<div class="a" style="left:6px;top:168px;width:16px;height:1px;background:#cfcfcf"></div>
<svg class="a" style="left:8.5px;top:171.7px;" width="12" height="12" viewBox="0 0 12 12"><path d="M1 3.5 L3.5 1 H10.5 V8 L8 10.5 H1 Z" fill="#8a5a30"/><rect x="1" y="3.5" width="7" height="7" fill="#b07a48" stroke="#5a3a18" stroke-width="0.6"/></svg>
<div class="hl" style="left:5px;top:183.7px;width:18px;height:14px;"></div>
<svg class="a" style="left:8.5px;top:184.7px;" width="12" height="12" viewBox="0 0 12 12"><path d="M1 3.5 L3.5 1 H10.5 V8 L8 10.5 H1 Z" fill="#8a5a30"/><rect x="1" y="3.5" width="7" height="7" fill="#b07a48" stroke="#5a3a18" stroke-width="0.6"/></svg>
<svg class="a" style="left:8.5px;top:198.5px;" width="12" height="12" viewBox="0 0 12 12"><path d="M1 3.5 L3.5 1 H10.5 V8 L8 10.5 H1 Z" fill="none" stroke="#444" stroke-width="0.9"/><path d="M1 3.5 H8 V10.5 M8 3.5 L10.5 1" fill="none" stroke="#444" stroke-width="0.8"/><rect x="3.5" y="1" width="7" height="7" fill="none" stroke="#444" stroke-width="0.5" opacity="0.6"/></svg>
<svg class="a" style="left:8.5px;top:211.5px;" width="12" height="12" viewBox="0 0 12 12"><path d="M1 3.5 L3.5 1 H10.5 V8 L8 10.5 H1 Z" fill="none" stroke="#444" stroke-width="0.9"/><path d="M1 3.5 H8 V10.5 M8 3.5 L10.5 1" fill="none" stroke="#444" stroke-width="0.8"/><rect x="3.5" y="1" width="7" height="7" fill="none" stroke="#444" stroke-width="0.5" opacity="0.6"/></svg>
<svg class="a" style="left:8.5px;top:224.5px;" width="12" height="12" viewBox="0 0 12 12"><path d="M1 3.5 L3.5 1 H10.5 V8 L8 10.5 H1 Z" fill="none" stroke="#333" stroke-width="0.9"/><path d="M1 3.5 H8 V10.5 M8 3.5 L10.5 1" fill="none" stroke="#333" stroke-width="0.8"/><rect x="3.5" y="1" width="7" height="7" fill="none" stroke="#333" stroke-width="0.5" opacity="0.6"/></svg>
<svg class="a" style="left:8.5px;top:237.5px;" width="12" height="12" viewBox="0 0 12 12"><rect x="0.5" y="0.5" width="11" height="11" fill="#fff" stroke="#3a6ab0" stroke-width="0.9"/><rect x="1" y="1" width="6" height="10" fill="#d8e8f8" stroke="#3a6ab0" stroke-width="0.8"/><path d="M8.5 3 H10.5 M8.5 6 H10.5 M8.5 9 H10.5" stroke="#3a6ab0" stroke-width="0.8"/></svg>
<div class="a" style="left:6px;top:250px;width:16px;height:1px;background:#cfcfcf"></div>
<svg class="a" style="left:8.5px;top:254px;" width="12" height="10" viewBox="0 0 12 10"><circle cx="4.5" cy="3" r="1.6" fill="#4a5a90"/><circle cx="8" cy="3.5" r="1.4" fill="#6a7aa8"/><rect x="1.5" y="5" width="9" height="4.5" rx="1" fill="#505a78"/><circle cx="6" cy="7.2" r="1.5" fill="#c8d0e0"/></svg>
<svg class="a" style="left:8.5px;top:266px;" width="12" height="12" viewBox="0 0 12 12"><circle cx="6" cy="6" r="4.8" fill="none" stroke="#222" stroke-width="1.3"/><path d="M3.5 6 L5.5 8.5 L9.5 1.5" stroke="#222" stroke-width="1.3" fill="none"/></svg>
<svg class="a" style="left:9.5px;top:279px;" width="10" height="14" viewBox="0 0 10 14"><circle cx="5" cy="5" r="4" fill="#f3e070" stroke="#c8a820" stroke-width="0.6"/><rect x="3.5" y="9" width="3" height="2" fill="#666"/><rect x="4.3" y="12" width="1.4" height="1.5" fill="#222"/></svg>
<svg class="a" style="left:6px;top:297px;" width="18" height="13" viewBox="0 0 18 13"><rect x="4" y="1" width="8" height="8" fill="#777" stroke="#444" stroke-width="0.6"/><rect x="1.5" y="3.5" width="8" height="8" fill="#7a4a28" stroke="#3a2010" stroke-width="0.6"/><path d="M14 6 L17 6 L15.5 8 Z" fill="#333"/></svg>
<svg class="a" style="left:8.5px;top:317px;" width="12" height="12" viewBox="0 0 12 12"><rect x="1.5" y="1.5" width="9" height="9" fill="#e6f0fb" stroke="#4a7ac8" stroke-width="0.9"/><path d="M3.5 3.5 L8.5 8.5 M8.5 3.5 L3.5 8.5" stroke="#7aa0d8" stroke-width="0.7" stroke-dasharray="1 0.8"/></svg>
<svg class="a" style="left:8.5px;top:328.6px;" width="12" height="12" viewBox="0 0 12 12"><rect x="1.5" y="1.5" width="9" height="9" fill="#e6f0fb" stroke="#4a7ac8" stroke-width="0.9"/><path d="M3 8 L5 4 H7 L9 8" stroke="#4a7ac8" stroke-width="0.8" fill="none"/></svg>
<svg class="a" style="left:8.5px;top:341.8px;" width="12" height="12" viewBox="0 0 12 12"><rect x="1.5" y="1.5" width="6" height="6" fill="#e6f0fb" stroke="#4a7ac8" stroke-width="0.8"/><rect x="4.5" y="4.5" width="6" height="6" fill="#e6f0fb" stroke="#4a7ac8" stroke-width="0.8"/></svg>
<svg class="a" style="left:8.5px;top:355px;" width="12" height="12" viewBox="0 0 12 12"><circle cx="5" cy="5" r="3" fill="#d8e8f8" stroke="#5a8ad0" stroke-width="0.9"/><path d="M7.2 7.2 L10 10" stroke="#c89030" stroke-width="1.5"/></svg>
<svg class="a" style="left:8.5px;top:368px;" width="12" height="12" viewBox="0 0 12 12"><rect x="1.5" y="1.5" width="9" height="9" fill="#e6f0fb" stroke="#3a6ab8" stroke-width="0.9"/><path d="M4 3 H8 M6 3 V6" stroke="#3a4a8a" stroke-width="0.8"/><circle cx="6" cy="7.5" r="1.8" fill="#3a5aa0"/></svg>
<div class="a" style="left:6px;top:382px;width:16px;height:1px;background:#cfcfcf"></div>
<div class="hl" style="left:5px;top:385.5px;width:17px;height:13px;"></div>
<svg class="a" style="left:8.5px;top:386px;" width="12" height="12" viewBox="0 0 12 12"><path d="M2 2 H5 V5 H2 Z M7 6 H10 V9 H7 Z M5 3.5 H8.5 V6" fill="#f6eeb0" stroke="#a09030" stroke-width="0.7"/></svg>
<div class="hl" style="left:5px;top:398.5px;width:17px;height:13px;"></div>
<svg class="a" style="left:8.5px;top:399px;" width="12" height="12" viewBox="0 0 12 12"><path d="M2 10 L9 3" stroke="#3a9a3a" stroke-width="1.1"/><path d="M8 2 L10 4" stroke="#333" stroke-width="1"/><rect x="1.5" y="1.5" width="9" height="9" fill="none" stroke="#b8a860" stroke-width="0.6"/></svg>
<div class="hl" style="left:5px;top:411.5px;width:17px;height:13px;"></div>
<svg class="a" style="left:8.5px;top:412px;" width="12" height="12" viewBox="0 0 12 12"><rect x="1.5" y="2.5" width="2.4" height="2.8" fill="#e0c058"/><rect x="1.5" y="6.1" width="2.4" height="2.8" fill="#e0c058"/><rect x="4.7" y="2.5" width="2.4" height="2.8" fill="#e0c058"/><rect x="4.7" y="6.1" width="2.4" height="2.8" fill="#e0c058"/><rect x="7.9" y="2.5" width="2.4" height="2.8" fill="#e0c058"/><rect x="7.9" y="6.1" width="2.4" height="2.8" fill="#e0c058"/></svg>
<div class="a" style="left:5px;top:425.5px;width:17px;height:13px;background:#ececec;border:1px solid #c8c8c8"></div>
<svg class="a" style="left:8.5px;top:426px;" width="12" height="12" viewBox="0 0 12 12"><path d="M2 2 V11" stroke="#777" stroke-width="0.8" stroke-dasharray="1 1"/><circle cx="7.5" cy="7.5" r="3" fill="#fff" stroke="#444" stroke-width="0.8"/><circle cx="7.5" cy="7.5" r="0.9" fill="#444"/></svg>
<div class="a" style="left:6px;top:439px;width:15px;height:12.5px;background:#ededed;border:1px solid #d0d0d0"></div>
<svg class="a" style="left:8.5px;top:439px;" width="12" height="12" viewBox="0 0 12 12"><circle cx="5.2" cy="5.2" r="3" fill="#f0f4f8" stroke="#333" stroke-width="1"/><path d="M7.4 7.4 L10 10" stroke="#333" stroke-width="1.5"/></svg>
<svg class="a" style="left:8.5px;top:452px;" width="12" height="12" viewBox="0 0 12 12"><rect x="3.5" y="0.5" width="8" height="8" fill="#666" stroke="#333" stroke-width="0.6"/><rect x="0.5" y="3.5" width="8" height="8" fill="#7a4a28" stroke="#3a2010" stroke-width="0.6"/></svg>
<svg class="a" style="left:8.5px;top:465px;" width="12" height="12" viewBox="0 0 12 12"><path d="M1 6 L5 2 H11 L8 10 H2 Z" fill="#e8c850" stroke="#a88a20" stroke-width="0.6"/></svg>
<div class="a" style="left:25px;top:72px;width:167px;height:11px;background:linear-gradient(#fefefe,#e6e6e6);border-bottom:1px solid #d4d4d4"></div>
<div class="t" style="left:29.70px;top:74.97px;font-size:6.25px;transform:scaleX(0.916);transform-origin:0 0;font-weight:bold;color:#111">Свойства</div>
<svg class="a" style="left:169.9px;top:73.7px" width="21" height="9" viewBox="0 0 21 8"><rect x="0" y="4.6" width="4.1" height="1.4" fill="#111"/><rect x="7.8" y="2.3" width="3.8" height="3.6" fill="none" stroke="#111" stroke-width="1"/><rect x="7.3" y="1.8" width="4.8" height="1.4" fill="#111"/><path d="M15.4 2 L19.2 6 M19.2 2 L15.4 6" stroke="#111" stroke-width="1.3"/></svg>
<div class="a" style="left:27px;top:84px;width:163px;height:11.5px;background:linear-gradient(#e2e2e2,#d8d8d8);border:1px solid #cdcdcd"></div>
<div class="t" style="left:30.00px;top:86.88px;font-size:6.10px;transform:scaleX(0.913);transform-origin:0 0;color:#222">Модель</div>
<svg class="a" style="left:181px;top:88px;" width="7" height="5" viewBox="0 0 7 5"><path d="M1 1 L3.5 3.5 L6 1" fill="none" stroke="#888" stroke-width="0.8"/></svg>
<div class="a" style="left:26.5px;top:96px;width:164.5px;height:216px;background:#fff;border-top:1px solid #c4c4c4;border-left:1px solid #d0d0d0"></div>
<div class="t" style="left:30.80px;top:100.44px;font-size:5.96px;transform:scaleX(0.899);transform-origin:0 0;color:#1a1a1a">Параметр</div>
<div class="t" style="left:38.90px;top:110.64px;font-size:5.96px;transform:scaleX(0.884);transform-origin:0 0;color:#1a1a1a">Наименование</div>
<div class="t" style="left:38.80px;top:121.74px;font-size:5.96px;transform:scaleX(0.995);transform-origin:0 0;color:#1a1a1a">Артикул</div>
<div class="t" style="left:38.80px;top:132.84px;font-size:5.96px;transform:scaleX(0.943);transform-origin:0 0;color:#1a1a1a">Количество изделий</div>
<div class="t" style="left:38.80px;top:143.94px;font-size:5.96px;transform:scaleX(0.912);transform-origin:0 0;color:#1a1a1a">Материалы</div>
<div class="t" style="left:38.80px;top:155.04px;font-size:5.96px;transform:scaleX(0.892);transform-origin:0 0;color:#1a1a1a">Замена материалов</div>
<div class="t" style="left:38.80px;top:166.54px;font-size:5.96px;transform:scaleX(0.930);transform-origin:0 0;color:#1a1a1a">Сечения и разрезы</div>
<div class="t" style="left:38.80px;top:177.64px;font-size:5.96px;transform:scaleX(0.933);transform-origin:0 0;color:#1a1a1a">Пользовательские</div>
<div class="t" style="left:38.80px;top:188.64px;font-size:5.96px;transform:scaleX(0.931);transform-origin:0 0;color:#1a1a1a">Дополнительные материалы</div>
<div class="t" style="left:128.60px;top:100.44px;font-size:5.96px;transform:scaleX(0.870);transform-origin:0 0;color:#1a1a1a">Значение</div>
<div class="t" style="left:129.60px;top:110.94px;font-size:5.96px;transform:scaleX(0.940);transform-origin:0 0;color:#1a1a1a">ПрихожаяЮ</div>
<div class="t" style="left:130.40px;top:133.04px;font-size:5.96px;transform:scaleX(1.000);transform-origin:0 0;color:#1a1a1a">1</div>
<div class="t" style="left:129.60px;top:155.64px;font-size:5.96px;transform:scaleX(0.974);transform-origin:0 0;color:#1a1a1a">&lt;Нет схемы&gt;</div>
<div class="t" style="left:129.60px;top:166.64px;font-size:5.96px;transform:scaleX(0.961);transform-origin:0 0;color:#1a1a1a">0 плоскостей</div>
<div class="t" style="left:129.60px;top:177.14px;font-size:5.96px;transform:scaleX(1.069);transform-origin:0 0;color:#1a1a1a">0 шт.</div>
<div class="t" style="left:129.60px;top:188.04px;font-size:5.96px;transform:scaleX(1.069);transform-origin:0 0;color:#1a1a1a">0 шт.</div>
<svg class="a" style="left:18px;top:182px;" width="60" height="45" viewBox="0 0 60 45"><path d="M5.5 13.3 Q15 7 27 2.3" fill="none" stroke="#111" stroke-width="1.3"/><path d="M5 15 Q12 20 20 26" fill="none" stroke="#222" stroke-width="0.9"/><path d="M16 15.5 Q40 15 53 40.5" fill="none" stroke="#111" stroke-width="1.9"/></svg>
<div class="a" style="left:25px;top:311.5px;width:167px;height:12.5px;background:linear-gradient(#fefefe,#e6e6e6)"></div>
<div class="t" style="left:29.90px;top:316.87px;font-size:6.40px;transform:scaleX(0.901);transform-origin:0 0;font-weight:bold;color:#111">Структура модели</div>
<svg class="a" style="left:170.3px;top:314.8px" width="21" height="9" viewBox="0 0 21 8"><rect x="0" y="4.6" width="4.1" height="1.4" fill="#111"/><rect x="7.8" y="2.3" width="3.8" height="3.6" fill="none" stroke="#111" stroke-width="1"/><rect x="7.3" y="1.8" width="4.8" height="1.4" fill="#111"/><path d="M15.4 2 L19.2 6 M19.2 2 L15.4 6" stroke="#111" stroke-width="1.3"/></svg>
<div class="a" style="left:26px;top:324px;width:166px;height:17px;background:linear-gradient(#f8f8f8,#e2e2e2);border-bottom:1px solid #cfcfcf"></div>
<svg class="a" style="left:29.5px;top:326px;" width="12" height="12" viewBox="0 0 12 12"><path d="M2.5 2 L10 10" stroke="#7a8698" stroke-width="2.2"/><path d="M10 2 L2 10" stroke="#6a7a90" stroke-width="2.4"/><path d="M1 11 L4 8" stroke="#3a6ab8" stroke-width="2.6"/></svg>
<svg class="a" style="left:44px;top:325px;" width="12" height="14" viewBox="0 0 12 14"><path d="M3.5 3 H8.5 M6 0.5 V5.5" stroke="#3aa040" stroke-width="2.2"/><path d="M3 11.5 Q6 8 10 8.5" stroke="#111" stroke-width="1" fill="none"/><circle cx="3" cy="11.5" r="1.1" fill="#111"/></svg>
<svg class="a" style="left:60px;top:325px;" width="12" height="14" viewBox="0 0 12 14"><text x="1" y="7" font-size="8" font-weight="bold" font-family="Liberation Sans" fill="#2a2a9a">?</text><path d="M3 11.5 Q6 8 10 8.5" stroke="#111" stroke-width="1" fill="none"/><circle cx="3" cy="11.5" r="1.1" fill="#111"/></svg>
<svg class="a" style="left:77px;top:325px;" width="12" height="14" viewBox="0 0 12 14"><path d="M3 11.5 Q6 8 10 8.5" stroke="#111" stroke-width="1" fill="none"/><circle cx="3" cy="11.5" r="1.1" fill="#111"/></svg>
<svg class="a" style="left:91px;top:325px;" width="12" height="14" viewBox="0 0 12 14"><path d="M2 3 H9" stroke="#d03030" stroke-width="1.8"/><path d="M3 11.5 Q6 8 10 8.5" stroke="#111" stroke-width="1" fill="none"/><circle cx="3" cy="11.5" r="1.1" fill="#111"/></svg>
<div class="sep" style="left:106px;top:326px;width:1px;height:13px;"></div>
<div class="hl" style="left:108.5px;top:325px;width:16px;height:15px;"></div>
<svg class="a" style="left:110.5px;top:326px;" width="12" height="13" viewBox="0 0 12 13"><path d="M1 1 H7 L9 3 V12 H1 Z" fill="#f4f8fc" stroke="#888" stroke-width="0.6"/><circle cx="5.5" cy="7" r="3.3" fill="#a8d0f0" stroke="#3a6aaa" stroke-width="1.1"/><path d="M8 9.5 L10.5 12" stroke="#d8a040" stroke-width="1.4"/></svg>
<svg class="a" style="left:126px;top:327px;" width="13" height="10" viewBox="0 0 13 10"><path d="M0.5 6 Q6.5 -1 12.5 6" fill="none" stroke="#333" stroke-width="1"/><path d="M1.5 6 Q6.5 10 11.5 6" fill="none" stroke="#333" stroke-width="0.8"/><circle cx="6.5" cy="5.5" r="2.4" fill="#3a6ab0"/></svg>
<svg class="a" style="left:140.3px;top:332.1px;" width="4" height="3" viewBox="0 0 4 3"><path d="M0 0 H3.6 L1.8 2.4 Z" fill="#222"/></svg>
<svg class="a" style="left:148px;top:326px;" width="11" height="12" viewBox="0 0 11 12"><path d="M3 2 H10 M3 4.5 H10 M3 7 H10 M3 9.5 H10" stroke="#555" stroke-width="0.9"/><path d="M1.5 1 V11" stroke="#555" stroke-width="1.2"/></svg>
<svg class="a" style="left:163px;top:327px;" width="10" height="10" viewBox="0 0 10 10"><rect x="1" y="3.5" width="6" height="5" rx="2" fill="none" stroke="#444" stroke-width="0.9"/><rect x="3" y="1.5" width="6" height="5" rx="2" fill="none" stroke="#444" stroke-width="0.9"/></svg>
<svg class="a" style="left:172.8px;top:332.1px;" width="4" height="3" viewBox="0 0 4 3"><path d="M0 0 H3.6 L1.8 2.4 Z" fill="#222"/></svg>
<div class="a" style="left:26px;top:341px;width:165px;height:118px;background:#fff"></div>
<div class="a" style="left:182px;top:351px;width:8px;height:108px;background:#f4f4f4"></div>
<svg class="a" style="left:183px;top:355px;" width="6" height="4" viewBox="0 0 6 4"><path d="M0.5 3.5 L3 1 L5.5 3.5" fill="none" stroke="#444" stroke-width="0.9"/></svg>
<div class="a" style="left:183px;top:441px;width:6px;height:8px;background:#cfcfcf"></div>
<svg class="a" style="left:183px;top:451px;" width="6" height="4" viewBox="0 0 6 4"><path d="M0.5 0.5 L3 3 L5.5 0.5" fill="none" stroke="#444" stroke-width="0.9"/></svg>
<div class="a" style="left:44.3px;top:351px;width:0.8px;height:103px;background:#bdbdbd"></div>
<div class="a" style="left:53.5px;top:347px;width:0.8px;height:7px;background:#bdbdbd"></div>
<div class="a" style="left:53.5px;top:353.4px;width:5.5px;height:0.8px;background:#bdbdbd"></div>
<div class="a" style="left:62.8px;top:367px;width:0.8px;height:23px;background:#bdbdbd"></div>
<div class="a" style="left:62.8px;top:371.5px;width:5.5px;height:0.8px;background:#bdbdbd"></div>
<div class="a" style="left:71.8px;top:394px;width:0.8px;height:24px;background:#bdbdbd"></div>
<div class="a" style="left:44.3px;top:426.5px;width:6px;height:0.8px;background:#bdbdbd"></div>
<div class="a" style="left:44.3px;top:435.7px;width:6px;height:0.8px;background:#bdbdbd"></div>
<div class="a" style="left:44.3px;top:444.9px;width:6px;height:0.8px;background:#bdbdbd"></div>
<div class="a" style="left:44.3px;top:453.5px;width:6px;height:0.8px;background:#bdbdbd"></div>
<div class="a" style="left:74.5px;top:398.9px;width:2.5px;height:0.8px;background:#bdbdbd"></div>
<div class="a" style="left:74.5px;top:408px;width:2.5px;height:0.8px;background:#bdbdbd"></div>
<div class="a" style="left:74.5px;top:417.2px;width:2.5px;height:0.8px;background:#bdbdbd"></div>
<svg class="a" style="left:58.5px;top:349.59999999999997px;" width="8" height="8" viewBox="0 0 8 8"><path d="M1.5 1 V6.5 H6.5 V1" fill="none" stroke="#333" stroke-width="0.9"/><path d="M0.5 2 H3 M4 1 V3" stroke="#333" stroke-width="0.6"/></svg>
<div class="t" style="left:70.20px;top:351.14px;font-size:5.96px;transform:scaleX(0.926);transform-origin:0 0;color:#222">Габаритная рамка</div>
<svg class="a" style="left:51.5px;top:359.8px;" width="5.4" height="5.4" viewBox="0 0 5.4 5.4"><rect x="0.5" y="0.5" width="4.4" height="4.4" fill="#fff" stroke="#c4c4c4" stroke-width="0.6"/><path d="M1.5 2.7 H3.9" stroke="#888" stroke-width="0.6"/></svg>
<svg class="a" style="left:58.2px;top:357.7px;" width="10" height="10" viewBox="0 0 10 10"><path d="M4 3.2 L6.6 0.6 L9.4 3.4 L6.8 6 Z" fill="#1e1e1e"/><path d="M2 5.5 L4.6 2.9 L7.3 5.6 L4.7 8.2 Z" fill="#2a2a2a"/><path d="M5 2.3 L8 5.3 M3.2 4.3 L6 7.1" stroke="#bbb" stroke-width="0.6"/><path d="M0.6 9.4 L2.6 7.4" stroke="#2a2aa0" stroke-width="1.6"/></svg>
<div class="t" style="left:70.20px;top:360.24px;font-size:5.96px;transform:scaleX(0.995);transform-origin:0 0;color:#222">отступы 4\1,5\1,5\2\0</div>
<svg class="a" style="left:68px;top:367.5px;" width="8" height="8" viewBox="0 0 8 8"><path d="M2 1.5 L3 0.5 H7 V6 L6 7 H2 Z" fill="#fff" stroke="#333" stroke-width="0.9"/><path d="M0.5 3 H2.5" stroke="#333" stroke-width="0.6"/></svg>
<div class="t" style="left:79.10px;top:369.24px;font-size:5.96px;transform:scaleX(0.934);transform-origin:0 0;color:#222">Габаритная рамка</div>
<svg class="a" style="left:61.2px;top:378.0px;" width="5.4" height="5.4" viewBox="0 0 5.4 5.4"><rect x="0.5" y="0.5" width="4.4" height="4.4" fill="#fff" stroke="#c4c4c4" stroke-width="0.6"/><path d="M1.5 2.7 H3.9 M2.7 1.5 V3.9" stroke="#888" stroke-width="0.6"/></svg>
<svg class="a" style="left:67.5px;top:376.5px;" width="9" height="9" viewBox="0 0 9 9"><path d="M1 3 L3 1 H8.5 V6.5 L6.5 8.5 H1 Z" fill="#262626"/><path d="M1 3 H6.5 V8.5 M6.5 3 L8.5 1" stroke="#555" stroke-width="0.5" fill="none"/></svg>
<div class="t" style="left:79.10px;top:378.44px;font-size:5.96px;transform:scaleX(0.890);transform-origin:0 0;color:#222">анимация</div>
<svg class="a" style="left:61.2px;top:387.2px;" width="5.4" height="5.4" viewBox="0 0 5.4 5.4"><rect x="0.5" y="0.5" width="4.4" height="4.4" fill="#fff" stroke="#c4c4c4" stroke-width="0.6"/><path d="M1.5 2.7 H3.9" stroke="#888" stroke-width="0.6"/></svg>
<svg class="a" style="left:67.5px;top:385.7px;" width="9" height="9" viewBox="0 0 9 9"><path d="M1 3 L3 1 H8.5 V6.5 L6.5 8.5 H1 Z" fill="#262626"/><path d="M1 3 H6.5 V8.5 M6.5 3 L8.5 1" stroke="#555" stroke-width="0.5" fill="none"/></svg>
<div class="t" style="left:79.10px;top:387.64px;font-size:5.96px;transform:scaleX(0.890);transform-origin:0 0;color:#222">анимация</div>
<svg class="a" style="left:69.9px;top:396.2px;" width="5.4" height="5.4" viewBox="0 0 5.4 5.4"><rect x="0.5" y="0.5" width="4.4" height="4.4" fill="#fff" stroke="#c4c4c4" stroke-width="0.6"/><path d="M1.5 2.7 H3.9 M2.7 1.5 V3.9" stroke="#888" stroke-width="0.6"/></svg>
<svg class="a" style="left:76.2px;top:394.09999999999997px;" width="10" height="10" viewBox="0 0 10 10"><path d="M4 3.2 L6.6 0.6 L9.4 3.4 L6.8 6 Z" fill="#1e1e1e"/><path d="M2 5.5 L4.6 2.9 L7.3 5.6 L4.7 8.2 Z" fill="#2a2a2a"/><path d="M5 2.3 L8 5.3 M3.2 4.3 L6 7.1" stroke="#bbb" stroke-width="0.6"/><path d="M0.6 9.4 L2.6 7.4" stroke="#2a2aa0" stroke-width="1.6"/></svg>
<div class="t" style="left:88.00px;top:396.64px;font-size:5.96px;transform:scaleX(0.912);transform-origin:0 0;color:#222">Фасад ↑</div>
<svg class="a" style="left:69.9px;top:405.3px;" width="5.4" height="5.4" viewBox="0 0 5.4 5.4"><rect x="0.5" y="0.5" width="4.4" height="4.4" fill="#fff" stroke="#c4c4c4" stroke-width="0.6"/><path d="M1.5 2.7 H3.9 M2.7 1.5 V3.9" stroke="#888" stroke-width="0.6"/></svg>
<svg class="a" style="left:76.2px;top:403.2px;" width="10" height="10" viewBox="0 0 10 10"><path d="M4 3.2 L6.6 0.6 L9.4 3.4 L6.8 6 Z" fill="#1e1e1e"/><path d="M2 5.5 L4.6 2.9 L7.3 5.6 L4.7 8.2 Z" fill="#2a2a2a"/><path d="M5 2.3 L8 5.3 M3.2 4.3 L6 7.1" stroke="#bbb" stroke-width="0.6"/><path d="M0.6 9.4 L2.6 7.4" stroke="#2a2aa0" stroke-width="1.6"/></svg>
<div class="t" style="left:88.00px;top:405.74px;font-size:5.96px;transform:scaleX(0.952);transform-origin:0 0;color:#222">Петли</div>
<svg class="a" style="left:69.9px;top:414.5px;" width="5.4" height="5.4" viewBox="0 0 5.4 5.4"><rect x="0.5" y="0.5" width="4.4" height="4.4" fill="#fff" stroke="#c4c4c4" stroke-width="0.6"/><path d="M1.5 2.7 H3.9 M2.7 1.5 V3.9" stroke="#888" stroke-width="0.6"/></svg>
<svg class="a" style="left:76.2px;top:412.4px;" width="10" height="10" viewBox="0 0 10 10"><path d="M4 3.2 L6.6 0.6 L9.4 3.4 L6.8 6 Z" fill="#1e1e1e"/><path d="M2 5.5 L4.6 2.9 L7.3 5.6 L4.7 8.2 Z" fill="#2a2a2a"/><path d="M5 2.3 L8 5.3 M3.2 4.3 L6 7.1" stroke="#bbb" stroke-width="0.6"/><path d="M0.6 9.4 L2.6 7.4" stroke="#2a2aa0" stroke-width="1.6"/></svg>
<div class="t" style="left:88.00px;top:414.94px;font-size:5.96px;transform:scaleX(0.962);transform-origin:0 0;color:#222">без ручки</div>
<svg class="a" style="left:50px;top:422px;" width="8" height="9" viewBox="0 0 8 9"><rect x="0.5" y="0.5" width="7" height="8" fill="#f4f4f4" stroke="#888" stroke-width="0.6"/><path d="M2 2.5 H6 M2 6 H6" stroke="#555" stroke-width="0.6"/><circle cx="4" cy="5" r="1.2" fill="none" stroke="#555" stroke-width="0.5"/></svg>
<div class="t" style="left:60.30px;top:424.24px;font-size:5.96px;transform:scaleX(0.918);transform-origin:0 0;color:#222">Параллельная линия</div>
<svg class="a" style="left:50px;top:431.5px;" width="9" height="9" viewBox="0 0 9 9"><rect x="1.5" y="1.5" width="6.5" height="6.5" rx="1" fill="#2a2a2a"/><rect x="3" y="3" width="4" height="4" fill="#8a8a8a"/><path d="M1 0.5 V8" stroke="#d06060" stroke-width="0.7"/></svg>
<div class="t" style="left:60.30px;top:433.44px;font-size:5.96px;transform:scaleX(0.988);transform-origin:0 0;color:#222">Щит</div>
<div class="t" style="left:76.90px;top:433.44px;font-size:5.96px;transform:scaleX(0.931);transform-origin:0 0;color:#b4b4b4">1099x898x16</div>
<svg class="a" style="left:50px;top:440.7px;" width="9" height="9" viewBox="0 0 9 9"><rect x="1.5" y="1.5" width="6.5" height="6.5" rx="1" fill="#2a2a2a"/><rect x="3" y="3" width="4" height="4" fill="#8a8a8a"/><path d="M1 0.5 V8" stroke="#d06060" stroke-width="0.7"/></svg>
<div class="t" style="left:60.30px;top:442.64px;font-size:5.96px;transform:scaleX(0.941);transform-origin:0 0;color:#222">зеркало</div>
<div class="t" style="left:86.20px;top:442.64px;font-size:5.96px;transform:scaleX(0.927);transform-origin:0 0;color:#b4b4b4">1097x896x4</div>
<svg class="a" style="left:50px;top:449.3px;" width="9" height="9" viewBox="0 0 9 9"><rect x="1.5" y="1.5" width="6.5" height="6.5" rx="1" fill="#2a2a2a"/><rect x="3" y="3" width="4" height="4" fill="#8a8a8a"/><path d="M1 0.5 V8" stroke="#d06060" stroke-width="0.7"/></svg>
<div class="t" style="left:60.30px;top:451.24px;font-size:5.96px;transform:scaleX(0.965);transform-origin:0 0;color:#222">крышка</div>
<div class="t" style="left:84.90px;top:451.24px;font-size:5.96px;transform:scaleX(0.949);transform-origin:0 0;color:#b4b4b4">900x550x25</div>
<div class="a" style="left:26px;top:341px;width:156px;height:11px;background:#fff"></div>
<div class="t" style="left:31.50px;top:344.56px;font-size:6.69px;transform:scaleX(0.763);transform-origin:0 0;color:#222">Элемент</div>
<div class="a" style="left:150px;top:342px;width:0.8px;height:9px;background:#e8e8e8"></div>
<div class="t" style="left:154.00px;top:346.70px;font-size:2.91px;transform:scaleX(2.476);transform-origin:0 0;color:#666">...</div>
<div class="a" style="left:166.5px;top:342px;width:0.8px;height:9px;background:#e8e8e8"></div>
<div class="t" style="left:170.00px;top:344.82px;font-size:6.25px;transform:scaleX(1.092);transform-origin:0 0;color:#222">О...</div>
<div class="a" style="left:26px;top:459px;width:165px;height:2.4px;background:#4a4a4a"></div>
<div class="a" style="left:25px;top:461px;width:166px;height:66px;background:#fff"></div>
<!--PANELS-->
<svg class="a" style="left:195px;top:86px" width="660" height="441" viewBox="195 86 660 441">
  <rect x="195" y="86" width="660" height="441" fill="#c3f0bd"/>
  <polygon points="610,86 855,86 855,527 610,527" fill="#ffffff"/>
  <polygon points="339,86 394.5,86 394.5,167.5 341,160 339,160" fill="#464129"/>
  <polygon points="394,86 611,86 611,162.4 394,167.3" fill="#fff"/>
  <path d="M394 167.3 L611 162.4" stroke="#333" stroke-width="0.9"/>
  <path d="M504.6 86 L504.6 164.8" stroke="#333" stroke-width="0.8"/>
  <path d="M392.8 86 L392.8 167" stroke="#3c7c3c" stroke-width="2.6"/>
  <polygon points="341,160 394.5,167.3 549,163.8 549,427 341,438" fill="#d2e8f5"/>
  <path d="M341 160 L394.5 167.3" stroke="#2a3a20" stroke-width="0.9"/>
  <path d="M340.3 158 L340.3 438" stroke="#111" stroke-width="1.7"/>
  <path d="M341.5 438 L341.5 527" stroke="#5aa05a" stroke-width="0.8"/>
  <rect x="548.5" y="163.2" width="62.5" height="364" fill="#464129"/>
  <path d="M610 163 L610 527" stroke="#3c6a3c" stroke-width="1.6"/>
  <path d="M548.8 163.5 L548.8 527" stroke="#2a2a20" stroke-width="0.8"/>
  <path d="M611.2 86 L611 162" stroke="#333" stroke-width="1"/>
  <path d="M714.7 86 L710.6 527" stroke="#333" stroke-width="1"/>
  <path d="M814.7 86 L808.5 527" stroke="#333" stroke-width="1"/>
  <path d="M195 172.3 L338 169.2" stroke="#52a852" stroke-width="0.8"/>
  <path d="M195 245.6 L338 240.7" stroke="#52a852" stroke-width="0.8"/>
  <path d="M195 448 L341 440" stroke="#52a852" stroke-width="0.8"/>
  <path d="M721 159 L855 155.3" stroke="#7ccf7c" stroke-width="1"/>
  <path d="M814 223 L855 221" stroke="#7ccf7c" stroke-width="1"/>
  <path d="M673 406.7 L673 527" stroke="#7ccf7c" stroke-width="1"/>
  <path d="M810.8 407.6 L855 405.3" stroke="#7ccf7c" stroke-width="1"/>
  <path d="M810 519 L855 515" stroke="#7ccf7c" stroke-width="1"/>
  <!-- shelf -->
  <polygon points="341.3,438.3 548.6,426.4 606.6,445 392.5,459" fill="#a86a3a"/>
  <path d="M341.3 438.3 L548.6 426.4 L606.6 445" fill="none" stroke="#4a3018" stroke-width="0.6"/>
  <polygon points="392.5,459 606.6,445 606.6,451.6 392.5,466" fill="#1010e8"/>
  <polygon points="341.3,438.3 392.5,459 392.5,466 341.3,444.5" fill="#1010d8"/>
  <path d="M341.3 444.5 L392.5 466 L606.6 451.6" fill="none" stroke="#000060" stroke-width="0.8"/>
  <path d="M548.6 426.4 L568 424" stroke="#5aba5a" stroke-width="0.9"/>
  <!-- cursor marker -->
  <circle cx="572" cy="201.8" r="8.3" fill="#b86a30"/>
  <circle cx="572" cy="201.8" r="7.2" fill="none" stroke="#f2c088" stroke-width="1.6"/>
  <circle cx="572" cy="201.8" r="5.6" fill="#e09a40"/>
  <circle cx="572" cy="201.8" r="4.3" fill="#eab050"/>
  <path d="M568.5 201.8 H575.5 M572 198.3 V205.3" stroke="#3a2a10" stroke-width="1"/>
</svg>
<!--VIEWPORT-->
<div class="a" style="left:855px;top:72px;width:120px;height:455px;background:#dedede"></div>
<div class="a" style="left:858px;top:72px;width:102px;height:11px;background:linear-gradient(#fefefe,#e6e6e6)"></div>
<div class="t" style="left:861.30px;top:75.24px;font-size:5.96px;transform:scaleX(0.979);transform-origin:0 0;font-weight:bold;color:#111">Файлы</div>
<svg class="a" style="left:938.3px;top:73.8px" width="21" height="9" viewBox="0 0 21 8"><rect x="0" y="4.6" width="4.1" height="1.4" fill="#111"/><rect x="7.8" y="2.3" width="3.8" height="3.6" fill="none" stroke="#111" stroke-width="1"/><rect x="7.3" y="1.8" width="4.8" height="1.4" fill="#111"/><path d="M15.4 2 L19.2 6 M19.2 2 L15.4 6" stroke="#111" stroke-width="1.3"/></svg>
<div class="a" style="left:858px;top:83px;width:102px;height:14px;background:#fafafa;border-bottom:1px solid #e4e4e4"></div>
<div class="t" style="left:860.10px;top:86.76px;font-size:6.69px;transform:scaleX(0.815);transform-origin:0 0;color:#222">Раздел</div>
<div class="a" style="left:884px;top:84.5px;width:61px;height:11px;background:linear-gradient(#e6e6e6,#d9d9d9);border:1px solid #cdcdcd"></div>
<div class="t" style="left:886.00px;top:87.27px;font-size:6.40px;transform:scaleX(0.870);transform-origin:0 0;color:#333">Фрагменты</div>
<svg class="a" style="left:937px;top:88px;" width="6" height="4" viewBox="0 0 6 4"><path d="M0.5 0.5 L3 3 L5.5 0.5" fill="none" stroke="#888" stroke-width="0.7"/></svg>
<svg class="a" style="left:950px;top:87px;" width="7" height="6" viewBox="0 0 7 6"><path d="M0 0 H7 L3.5 5.5 Z" fill="#111"/></svg>
<div class="a" style="left:858px;top:97px;width:102px;height:14px;background:#fafafa;border-bottom:1px solid #d0d0d0"></div>
<div class="t" style="left:860.10px;top:101.22px;font-size:6.25px;transform:scaleX(0.881);transform-origin:0 0;color:#222">Папка</div>
<div class="a" style="left:883.5px;top:98px;width:40px;height:12px;background:#fff"></div>
<div class="t" style="left:885.10px;top:101.22px;font-size:6.25px;transform:scaleX(0.865);transform-origin:0 0;color:#222">Положение ру</div>
<div class="a" style="left:922px;top:99.5px;width:8.5px;height:9px;background:#e0e0e0;border:1px solid #bbb"></div>
<svg class="a" style="left:923.5px;top:102px;" width="6" height="4" viewBox="0 0 6 4"><path d="M0 0 H5.5 L2.75 3.5 Z" fill="#111"/></svg>
<svg class="a" style="left:934.5px;top:99px;" width="9" height="10" viewBox="0 0 9 10"><rect x="0.5" y="2.5" width="8" height="7" fill="#e0b840" stroke="#a08020" stroke-width="0.6"/><path d="M2 6 L4 8 L8 1.5" stroke="#30a030" stroke-width="1.4" fill="none"/></svg>
<div class="a" style="left:946px;top:98.5px;width:11px;height:11px;background:#f0f0f0;border:1px solid #ddd"></div>
<svg class="a" style="left:947px;top:99.5px;" width="9" height="9" viewBox="0 0 9 9"><circle cx="5" cy="4" r="2.8" fill="#e8f4fc" stroke="#6aa0d0" stroke-width="0.8"/><path d="M3 6 L0.8 8.5" stroke="#d0a050" stroke-width="1.2"/></svg>
<div class="a" style="left:858px;top:111px;width:102px;height:208px;background:#fff;border-left:1px solid #c4c4c4;border-right:1px solid #d8d8d8;border-bottom:1px solid #c4c4c4"></div>
<div class="a" style="left:859.8px;top:112.5px;width:39px;height:27.5px;background:#e0e0e0"></div>
<svg class="a" style="left:872.8px;top:114.6px;" width="15" height="16" viewBox="0 0 15 16"><path d="M1 1 V15 M13 1 V15" stroke="#c4c4c4" stroke-width="0.6"/><path d="M2 1 H3 M6 1 H7 M10 1 H11 M2 15 H3 M6 15 H7 M10 15 H11" stroke="#777" stroke-width="0.8"/></svg>
<div class="t" style="left:866.00px;top:132.56px;font-size:6.69px;transform:scaleX(0.892);transform-origin:0 0;color:#333">без ручки</div>
<svg class="a" style="left:912.4px;top:114.6px;" width="15" height="16" viewBox="0 0 15 16"><path d="M1 1 V15 M13 1 V15" stroke="#c4c4c4" stroke-width="0.6"/><path d="M2 1 H3 M6 1 H7 M10 1 H11 M2 15 H3 M6 15 H7 M10 15 H11" stroke="#777" stroke-width="0.8"/></svg>
<div class="t" style="left:900.80px;top:132.56px;font-size:6.69px;transform:scaleX(0.843);transform-origin:0 0;color:#333">верх35лево35</div>
<svg class="a" style="left:872.8px;top:154.2px;" width="15" height="16" viewBox="0 0 15 16"><path d="M1 1 V15 M13 1 V15" stroke="#c4c4c4" stroke-width="0.6"/><path d="M2 1 H3 M6 1 H7 M10 1 H11 M2 15 H3 M6 15 H7 M10 15 H11" stroke="#777" stroke-width="0.8"/></svg>
<div class="t" style="left:861.20px;top:173.56px;font-size:6.69px;transform:scaleX(0.862);transform-origin:0 0;color:#333">верх35поце...</div>
<svg class="a" style="left:912.4px;top:154.2px;" width="15" height="16" viewBox="0 0 15 16"><path d="M1 1 V15 M13 1 V15" stroke="#c4c4c4" stroke-width="0.6"/><path d="M2 1 H3 M6 1 H7 M10 1 H11 M2 15 H3 M6 15 H7 M10 15 H11" stroke="#777" stroke-width="0.8"/></svg>
<div class="t" style="left:900.80px;top:173.56px;font-size:6.69px;transform:scaleX(0.868);transform-origin:0 0;color:#333">верх35прав...</div>
<svg class="a" style="left:872.8px;top:194.3px;" width="15" height="16" viewBox="0 0 15 16"><path d="M1 1 V15 M13 1 V15" stroke="#c4c4c4" stroke-width="0.6"/><path d="M2 1 H3 M6 1 H7 M10 1 H11 M2 15 H3 M6 15 H7 M10 15 H11" stroke="#777" stroke-width="0.8"/></svg>
<div class="t" style="left:861.20px;top:214.36px;font-size:6.69px;transform:scaleX(0.850);transform-origin:0 0;color:#333">низ35поцен...</div>
<svg class="a" style="left:912.4px;top:194.3px;" width="15" height="16" viewBox="0 0 15 16"><path d="M1 1 V15 M13 1 V15" stroke="#c4c4c4" stroke-width="0.6"/><path d="M2 1 H3 M6 1 H7 M10 1 H11 M2 15 H3 M6 15 H7 M10 15 H11" stroke="#777" stroke-width="0.8"/></svg>
<div class="t" style="left:901.20px;top:214.36px;font-size:6.69px;transform:scaleX(0.811);transform-origin:0 0;color:#333">низ35слево35</div>
<svg class="a" style="left:872.8px;top:234.3px;" width="15" height="16" viewBox="0 0 15 16"><path d="M1 1 V15 M13 1 V15" stroke="#c4c4c4" stroke-width="0.6"/><path d="M2 1 H3 M6 1 H7 M10 1 H11 M2 15 H3 M6 15 H7 M10 15 H11" stroke="#777" stroke-width="0.8"/></svg>
<div class="t" style="left:861.20px;top:253.96px;font-size:6.69px;transform:scaleX(0.861);transform-origin:0 0;color:#333">низ35справ...</div>
<div class="a" style="left:858px;top:320.5px;width:102px;height:10.5px;background:linear-gradient(#fefefe,#e6e6e6)"></div>
<div class="t" style="left:861.50px;top:323.28px;font-size:6.10px;transform:scaleX(0.954);transform-origin:0 0;font-weight:bold;color:#111">История</div>
<svg class="a" style="left:938.5px;top:322.1px" width="21" height="9" viewBox="0 0 21 8"><rect x="0" y="4.6" width="4.1" height="1.4" fill="#111"/><rect x="7.8" y="2.3" width="3.8" height="3.6" fill="none" stroke="#111" stroke-width="1"/><rect x="7.3" y="1.8" width="4.8" height="1.4" fill="#111"/><path d="M15.4 2 L19.2 6 M19.2 2 L15.4 6" stroke="#111" stroke-width="1.3"/></svg>
<div class="a" style="left:858px;top:331px;width:102px;height:196px;background:#fff;border-left:1px solid #c4c4c4;border-top:1px solid #c4c4c4;border-right:1px solid #d0d0d0"></div>
<div class="a" style="left:859px;top:517px;width:92px;height:8px;background:#cdd7e4"></div>
<div class="a" style="left:858px;top:332px;width:93px;height:194px;overflow:hidden">
<div class="t" style="left:6.00px;top:3.86px;font-size:6.69px;transform:scaleX(0.822);transform-origin:0 0;color:#1a1a1a">81:</div>
<div class="t" style="left:19.10px;top:3.86px;font-size:6.69px;transform:scaleX(0.822);transform-origin:0 0;color:#1a1a1a">Замена материала</div>
<div class="t" style="left:6.00px;top:12.98px;font-size:6.69px;transform:scaleX(0.822);transform-origin:0 0;color:#1a1a1a">82:</div>
<div class="t" style="left:19.10px;top:12.98px;font-size:6.69px;transform:scaleX(0.822);transform-origin:0 0;color:#1a1a1a">Перемещение объектов</div>
<div class="t" style="left:6.00px;top:22.10px;font-size:6.69px;transform:scaleX(0.822);transform-origin:0 0;color:#1a1a1a">83:</div>
<div class="t" style="left:19.10px;top:22.10px;font-size:6.69px;transform:scaleX(0.822);transform-origin:0 0;color:#1a1a1a">Создание блока Блок1</div>
<div class="t" style="left:6.00px;top:31.22px;font-size:6.69px;transform:scaleX(0.822);transform-origin:0 0;color:#c0c0c0">84:</div>
<div class="t" style="left:19.10px;top:31.22px;font-size:6.69px;transform:scaleX(0.822);transform-origin:0 0;color:#c0c0c0">Установка корпус 2</div>
<div class="t" style="left:6.00px;top:40.34px;font-size:6.69px;transform:scaleX(0.822);transform-origin:0 0;color:#1a1a1a">85:</div>
<div class="t" style="left:19.10px;top:40.34px;font-size:6.69px;transform:scaleX(0.822);transform-origin:0 0;color:#1a1a1a">Отмена 1 действий</div>
<div class="t" style="left:6.00px;top:49.46px;font-size:6.69px;transform:scaleX(0.822);transform-origin:0 0;color:#1a1a1a">86:</div>
<div class="t" style="left:19.10px;top:49.46px;font-size:6.69px;transform:scaleX(0.822);transform-origin:0 0;color:#1a1a1a">Установка корпус 2</div>
<div class="t" style="left:6.00px;top:58.58px;font-size:6.69px;transform:scaleX(0.822);transform-origin:0 0;color:#1a1a1a">87:</div>
<div class="t" style="left:19.10px;top:58.58px;font-size:6.69px;transform:scaleX(0.822);transform-origin:0 0;color:#1a1a1a">Создание вспомогательной л</div>
<div class="t" style="left:6.00px;top:67.70px;font-size:6.69px;transform:scaleX(0.822);transform-origin:0 0;color:#1a1a1a">88:</div>
<div class="t" style="left:19.10px;top:67.70px;font-size:6.69px;transform:scaleX(0.822);transform-origin:0 0;color:#1a1a1a">Установка панели</div>
<div class="t" style="left:6.00px;top:76.82px;font-size:6.69px;transform:scaleX(0.822);transform-origin:0 0;color:#1a1a1a">89:</div>
<div class="t" style="left:19.10px;top:76.82px;font-size:6.69px;transform:scaleX(0.822);transform-origin:0 0;color:#1a1a1a">Редактирование контура и с</div>
<div class="t" style="left:6.00px;top:85.94px;font-size:6.69px;transform:scaleX(0.822);transform-origin:0 0;color:#1a1a1a">90:</div>
<div class="t" style="left:19.10px;top:85.94px;font-size:6.69px;transform:scaleX(0.822);transform-origin:0 0;color:#1a1a1a">Установка фурнитуры</div>
<div class="t" style="left:6.00px;top:95.06px;font-size:6.69px;transform:scaleX(0.822);transform-origin:0 0;color:#1a1a1a">91:</div>
<div class="t" style="left:19.10px;top:95.06px;font-size:6.69px;transform:scaleX(0.822);transform-origin:0 0;color:#1a1a1a">Установка фасад001</div>
<div class="t" style="left:6.00px;top:104.18px;font-size:6.69px;transform:scaleX(0.822);transform-origin:0 0;color:#1a1a1a">92:</div>
<div class="t" style="left:19.10px;top:104.18px;font-size:6.69px;transform:scaleX(0.822);transform-origin:0 0;color:#1a1a1a">Замена блока</div>
<div class="t" style="left:6.00px;top:113.30px;font-size:6.69px;transform:scaleX(0.822);transform-origin:0 0;color:#1a1a1a">93:</div>
<div class="t" style="left:19.10px;top:113.30px;font-size:6.69px;transform:scaleX(0.822);transform-origin:0 0;color:#1a1a1a">Удаление облицовки кромки</div>
<div class="t" style="left:6.00px;top:122.42px;font-size:6.69px;transform:scaleX(0.822);transform-origin:0 0;color:#1a1a1a">94:</div>
<div class="t" style="left:19.10px;top:122.42px;font-size:6.69px;transform:scaleX(0.822);transform-origin:0 0;color:#1a1a1a">Замена материала</div>
<div class="t" style="left:6.00px;top:131.54px;font-size:6.69px;transform:scaleX(0.822);transform-origin:0 0;color:#1a1a1a">95:</div>
<div class="t" style="left:19.10px;top:131.54px;font-size:6.69px;transform:scaleX(0.822);transform-origin:0 0;color:#1a1a1a">Создание вспомогательной л</div>
<div class="t" style="left:6.00px;top:140.66px;font-size:6.69px;transform:scaleX(0.822);transform-origin:0 0;color:#1a1a1a">96:</div>
<div class="t" style="left:19.10px;top:140.66px;font-size:6.69px;transform:scaleX(0.822);transform-origin:0 0;color:#1a1a1a">Установка панели</div>
<div class="t" style="left:6.00px;top:149.78px;font-size:6.69px;transform:scaleX(0.822);transform-origin:0 0;color:#1a1a1a">97:</div>
<div class="t" style="left:19.10px;top:149.78px;font-size:6.69px;transform:scaleX(0.822);transform-origin:0 0;color:#1a1a1a">Редактирование контура и с</div>
<div class="t" style="left:6.00px;top:158.90px;font-size:6.69px;transform:scaleX(0.822);transform-origin:0 0;color:#1a1a1a">98:</div>
<div class="t" style="left:19.10px;top:158.90px;font-size:6.69px;transform:scaleX(0.822);transform-origin:0 0;color:#1a1a1a">Установка панели</div>
<div class="t" style="left:6.00px;top:168.02px;font-size:6.69px;transform:scaleX(0.822);transform-origin:0 0;color:#1a1a1a">99:</div>
<div class="t" style="left:19.10px;top:168.02px;font-size:6.69px;transform:scaleX(0.822);transform-origin:0 0;color:#1a1a1a">Редактирование контура и с</div>
<div class="t" style="left:6.80px;top:177.14px;font-size:6.69px;transform:scaleX(0.822);transform-origin:0 0;color:#1a1a1a">100:</div>
<div class="t" style="left:21.60px;top:177.14px;font-size:6.69px;transform:scaleX(0.822);transform-origin:0 0;color:#1a1a1a">Установка панели</div>
<div class="t" style="left:6.80px;top:186.26px;font-size:6.69px;transform:scaleX(0.822);transform-origin:0 0;color:#1a1a1a">101:</div>
<div class="t" style="left:21.60px;top:186.26px;font-size:6.69px;transform:scaleX(0.822);transform-origin:0 0;color:#1a1a1a">Редактирование контура и</div>
</div>
<div class="a" style="left:951px;top:332px;width:8px;height:194px;background:#f2f2f2"></div>
<svg class="a" style="left:952px;top:335px;" width="6" height="4" viewBox="0 0 6 4"><path d="M0.5 3.5 L3 1 L5.5 3.5" fill="none" stroke="#444" stroke-width="0.9"/></svg>
<div class="a" style="left:952px;top:480px;width:6px;height:36px;background:#cdcdcd"></div>
<svg class="a" style="left:952px;top:519px;" width="6" height="4" viewBox="0 0 6 4"><path d="M0.5 0.5 L3 3 L5.5 0.5" fill="none" stroke="#444" stroke-width="0.9"/></svg>
<div class="a" style="left:962px;top:72px;width:13px;height:126px;background:linear-gradient(90deg,#f4f4f4,#e6e6e6);border:1px solid #d0d0d0"></div>
<svg class="a" style="left:963.5px;top:74.5px;" width="11" height="11" viewBox="0 0 11 11"><path d="M1 4 L6 1 L10 4 L9 10 L2 10 Z" fill="#f3dc60" stroke="#c8a830" stroke-width="0.6"/></svg>
<svg class="a" style="left:963.5px;top:90.5px;" width="11" height="11" viewBox="0 0 11 11"><path d="M2 10 L9 2 M3 3 L9 10" stroke="#333" stroke-width="1.2"/><circle cx="2" cy="9.5" r="1.5" fill="none" stroke="#333"/></svg>
<svg class="a" style="left:963.5px;top:102.5px;" width="11" height="11" viewBox="0 0 11 11"><rect x="1" y="0.5" width="9" height="10" fill="#8a5a30" stroke="#3a2010" stroke-width="0.6"/><rect x="3" y="2" width="2" height="7" fill="#d0a070"/><rect x="6" y="2" width="2" height="7" fill="#d0a070"/></svg>
<svg class="a" style="left:963.5px;top:117.1px;" width="11" height="11" viewBox="0 0 11 11"><rect x="4" y="0.5" width="3" height="6" fill="#444"/><path d="M1 10 L2 6 H9 L10 10 Z" fill="#7a5a40"/></svg>
<svg class="a" style="left:963.5px;top:129.3px;" width="11" height="11" viewBox="0 0 11 11"><path d="M1 3.5 L5.5 1 L10 3.5 V8.5 L5.5 10.5 L1 8.5 Z" fill="#8a5a30" stroke="#3a2010" stroke-width="0.6"/><path d="M1 3.5 L5.5 6 L10 3.5 M5.5 6 V10.5" stroke="#c89060" stroke-width="0.6" fill="none"/></svg>
<svg class="a" style="left:963.5px;top:142.5px;" width="11" height="11" viewBox="0 0 11 11"><text x="1" y="10" font-size="11" font-weight="bold" font-family="Liberation Sans" fill="#111">Σ</text></svg>
<svg class="a" style="left:963.5px;top:155.5px;" width="11" height="11" viewBox="0 0 11 11"><circle cx="3" cy="3" r="2" fill="#3a78d0"/><rect x="1" y="5" width="5" height="5" fill="#30a040"/><rect x="6" y="3" width="4" height="7" fill="#e09030"/></svg>
<svg class="a" style="left:963.5px;top:169.0px;" width="11" height="11" viewBox="0 0 11 11"><path d="M0.5 6 Q5.5 0 10.5 6 Q5.5 11 0.5 6 Z" fill="#2a6ac8"/><circle cx="5.5" cy="6" r="2" fill="#fff"/></svg>
<div class="a" style="left:964px;top:182px;width:10px;height:0.8px;background:#ccc"></div>
<div class="a" style="left:963px;top:183.5px;width:12px;height:13px;background:#f5dc7a;border:1px solid #c8a840"></div>
<svg class="a" style="left:963.5px;top:184.5px;" width="11" height="11" viewBox="0 0 11 11"><rect x="1" y="2" width="9" height="7" fill="#f0c050" stroke="#c09020" stroke-width="0.6"/><path d="M3 5 H8" stroke="#a07010" stroke-width="0.7"/></svg>
<!--RIGHT-->
<div class="a" style="left:0px;top:527px;width:975px;height:21px;background:linear-gradient(90deg,#3c1210 0px,#461411 300px,#561912 470px,#561a14 600px,#421613 780px,#3b1412 975px)"></div>
<div class="a" style="left:0px;top:527px;width:3px;height:21px;background:linear-gradient(90deg,#6a6a6a 0,#6a6a6a 2px,#54575a 2px)"></div>
<div class="a" style="left:3px;top:527px;width:25px;height:21px;background:#3e1210"></div>
<svg class="a" style="left:11px;top:533.4px;" width="9" height="9" viewBox="0 0 9 9"><rect x="0" y="0.7" width="3.9" height="3.4" fill="#f4f0f0"/><rect x="4.6" y="0" width="4.4" height="4.1" fill="#f4f0f0"/><rect x="0" y="4.8" width="3.9" height="3.4" fill="#f4f0f0"/><rect x="4.6" y="4.8" width="4.4" height="4.2" fill="#f4f0f0"/></svg>
<div class="a" style="left:28px;top:527px;width:144px;height:21px;background:#6d3832"></div>
<svg class="a" style="left:33px;top:532px;" width="11" height="11" viewBox="0 0 11 11"><circle cx="6.5" cy="4.5" r="3.4" fill="none" stroke="#e8d4d0" stroke-width="1"/><path d="M4 7 L1 10.5" stroke="#e8d4d0" stroke-width="1.1"/></svg>
<div class="t" style="left:48.50px;top:534.34px;font-size:8.58px;transform:scaleX(0.905);transform-origin:0 0;color:#eddcd8">Поиск</div>
<svg class="a" style="left:181px;top:533px;" width="10" height="10" viewBox="0 0 10 10"><rect x="1" y="2.5" width="5.5" height="5" fill="none" stroke="#e8d8d4" stroke-width="0.9"/><path d="M0.5 0.8 H7 M0.5 9.2 H7 M8.8 0 V10" stroke="#e8d8d4" stroke-width="0.9"/></svg>
<div class="a" style="left:423px;top:527px;width:24px;height:21px;background:#6a3a38"></div>
<div class="a" style="left:424px;top:546px;width:22px;height:2px;background:#c8a0a0"></div>
<svg class="a" style="left:205.6px;top:532px;" width="12" height="12" viewBox="0 0 12 12"><path d="M1 3 H5 L6 4 H11 V10 H1 Z" fill="#e8b84a"/><rect x="1" y="5" width="10" height="5" fill="#f5d070"/><rect x="3" y="6.5" width="6" height="2" fill="#3a8ad0"/></svg>
<svg class="a" style="left:230px;top:532px;" width="12" height="12" viewBox="0 0 12 12"><rect x="2" y="0.5" width="8" height="11" fill="#8a9ab0"/><rect x="3" y="1.5" width="6" height="2.5" fill="#dde"/><g fill="#eef"><rect x="3.0" y="5.0" width="1.4" height="1.4"/><rect x="3.0" y="7.2" width="1.4" height="1.4"/><rect x="3.0" y="9.4" width="1.4" height="1.4"/><rect x="5.2" y="5.0" width="1.4" height="1.4"/><rect x="5.2" y="7.2" width="1.4" height="1.4"/><rect x="5.2" y="9.4" width="1.4" height="1.4"/><rect x="7.4" y="5.0" width="1.4" height="1.4"/><rect x="7.4" y="7.2" width="1.4" height="1.4"/><rect x="7.4" y="9.4" width="1.4" height="1.4"/></g></svg>
<svg class="a" style="left:255.3px;top:532px;" width="12" height="12" viewBox="0 0 12 12"><circle cx="6" cy="6" r="5.8" fill="#2d6ae8"/><text x="6" y="8" font-size="5" font-family="Liberation Sans" fill="#fff" text-anchor="middle">zm</text></svg>
<svg class="a" style="left:280px;top:532px;" width="12" height="12" viewBox="0 0 12 12"><rect x="0.5" y="0.5" width="11" height="11" fill="#111"/><circle cx="6" cy="6" r="2.5" fill="#f0c020"/><path d="M6 1 V11 M1 6 H11 M2.5 2.5 L9.5 9.5 M9.5 2.5 L2.5 9.5" stroke="#f0c020" stroke-width="0.7"/></svg>
<svg class="a" style="left:304.7px;top:532px;" width="12" height="12" viewBox="0 0 12 12"><circle cx="6" cy="6" r="5.3" fill="#1e8a3e" stroke="#3aba5a" stroke-width="0.8"/><path d="M4 4 Q4.5 7.5 8 8" stroke="#fff" stroke-width="1.2" fill="none"/></svg>
<svg class="a" style="left:330px;top:532px;" width="12" height="12" viewBox="0 0 12 12"><circle cx="6" cy="6" r="5.8" fill="#dd3b2f"/><path d="M6 6 L11.5 4.5 A5.8 5.8 0 0 1 4 11.6 Z" fill="#f6c21c"/><path d="M6 6 L4 11.6 A5.8 5.8 0 0 1 1 3 Z" fill="#2ba24c"/><circle cx="6" cy="6" r="2.6" fill="#fff"/><circle cx="6" cy="6" r="1.9" fill="#3d7be8"/></svg>
<svg class="a" style="left:355px;top:532px;" width="12" height="12" viewBox="0 0 12 12"><path d="M0.5 9 Q4 2 11.5 2 Q9 9 0.5 9 Z" fill="#2a5ae0"/><path d="M2 8.5 Q6 5 10 4" stroke="#fff" stroke-width="0.8" fill="none"/></svg>
<svg class="a" style="left:379.3px;top:532px;" width="12" height="12" viewBox="0 0 12 12"><circle cx="6" cy="6" r="5.8" fill="#3a9ad8"/><path d="M2.5 6 L9.5 3 L8.5 9 L6 7.5 Z" fill="#fff"/></svg>
<svg class="a" style="left:405px;top:532px;" width="12" height="12" viewBox="0 0 12 12"><rect x="1" y="0.5" width="10" height="11" rx="1" fill="#2a6ad8"/><path d="M1 10 L5 5 L8 8 L11 3 V11 H1 Z" fill="#9ad0f8"/></svg>
<svg class="a" style="left:429.6px;top:532px;" width="12" height="12" viewBox="0 0 12 12"><rect x="0.5" y="1" width="11" height="10" rx="1" fill="#3a7ad8"/><path d="M2 5 Q4 3 6 5 T10 5 M2 8 Q4 6 6 8 T10 8" stroke="#fff" stroke-width="1" fill="none"/></svg>
<svg class="a" style="left:839.5px;top:535px;" width="8" height="6" viewBox="0 0 8 6"><path d="M0.5 5 L4 1 L7.5 5" fill="none" stroke="#eee" stroke-width="1"/></svg>
<svg class="a" style="left:852px;top:532px;" width="6" height="11" viewBox="0 0 6 11"><rect x="1.5" y="0.5" width="3" height="7" rx="1.5" fill="#eee"/><path d="M3 8 V10.5 M1 10.5 H5" stroke="#eee" stroke-width="0.8"/></svg>
<svg class="a" style="left:862px;top:532px;" width="11" height="11" viewBox="0 0 11 11"><rect x="1" y="1" width="8" height="6" fill="none" stroke="#eee" stroke-width="0.9"/><path d="M5 7 V10 M2 10 H8" stroke="#eee" stroke-width="0.9"/></svg>
<svg class="a" style="left:875px;top:533px;" width="10" height="9" viewBox="0 0 10 9"><path d="M0.5 3 H3 L6 0.5 V8.5 L3 6 H0.5 Z" fill="none" stroke="#eee" stroke-width="0.8"/><path d="M7.5 2.5 Q9 4.5 7.5 6.5" stroke="#eee" stroke-width="0.8" fill="none"/></svg>
<svg class="a" style="left:888px;top:532px;" width="10" height="11" viewBox="0 0 10 11"><circle cx="5" cy="4" r="3" fill="none" stroke="#eee" stroke-width="0.9"/><rect x="2" y="7" width="6" height="3" fill="none" stroke="#eee" stroke-width="0.8"/></svg>
<div class="t" style="left:902px;top:534.5px;font-size:6.3px;color:#eee">РУС</div>
<div class="t" style="left:926.8px;top:530.5px;font-size:6.1px;color:#eee">21:00</div>
<div class="t" style="left:921px;top:538.5px;font-size:6.1px;color:#eee">18.08.2025</div>
<svg class="a" style="left:955px;top:532px;" width="11" height="11" viewBox="0 0 11 11"><path d="M0.5 0.5 H10.5 V8 H4 L1.5 10.5 V8 H0.5 Z" fill="none" stroke="#eee" stroke-width="0.9"/></svg>
<!--TASKBAR-->
</body></html>
